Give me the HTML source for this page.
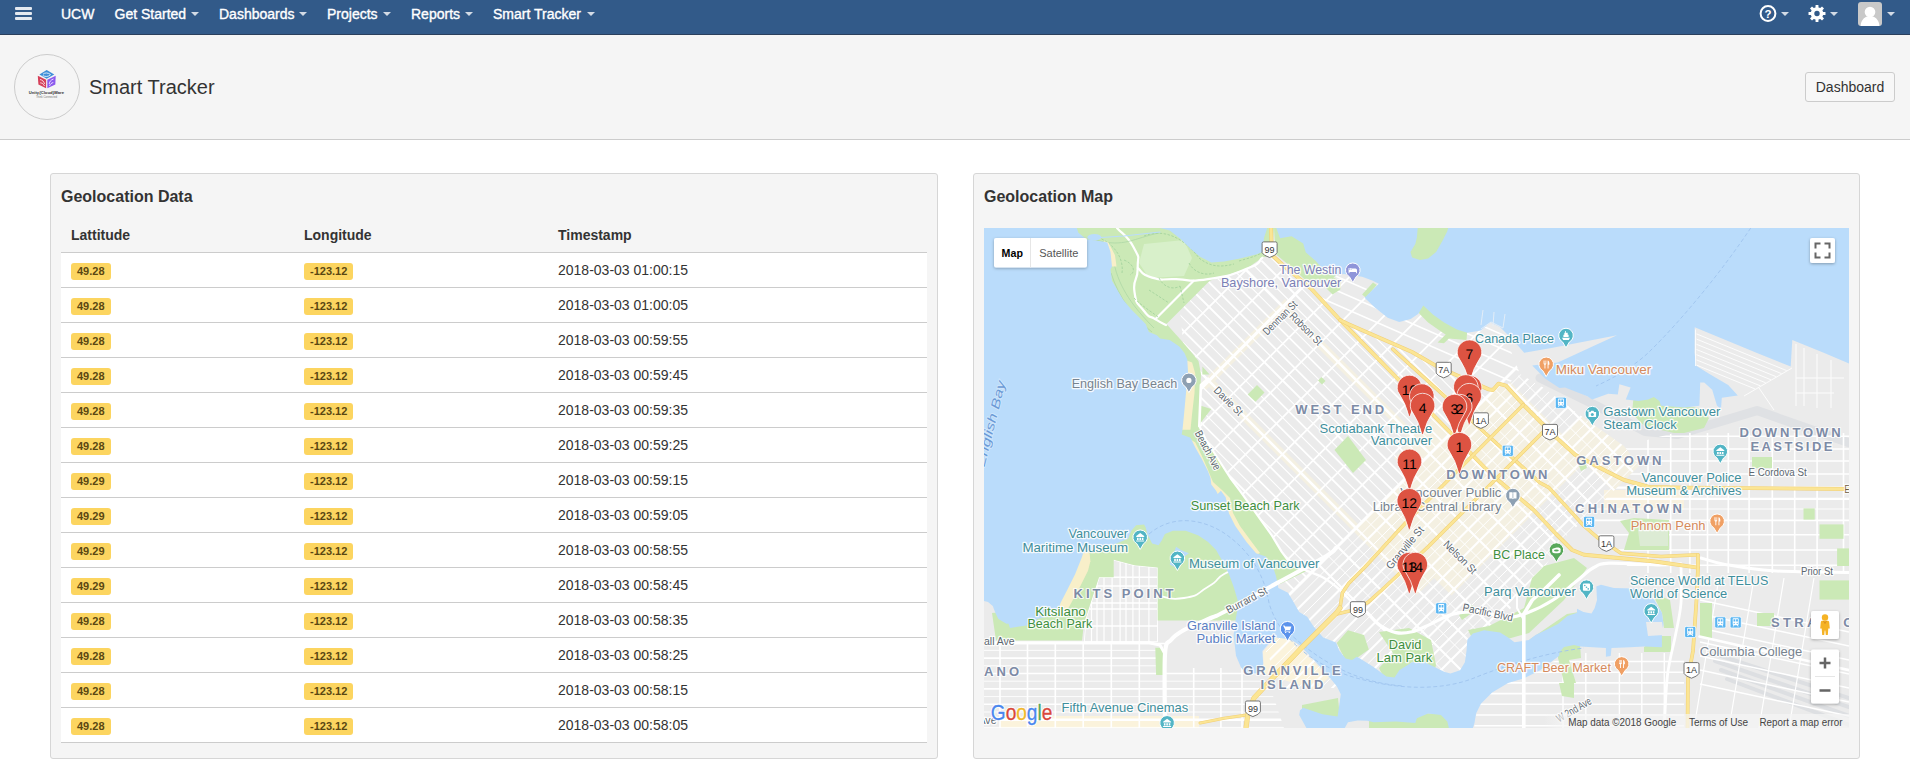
<!DOCTYPE html>
<html lang="en">
<head>
<meta charset="utf-8">
<title>Smart Tracker</title>
<style>
*{box-sizing:border-box;}
html,body{margin:0;padding:0;}
body{width:1910px;height:781px;overflow:hidden;background:#fff;color:#333;font-family:"Liberation Sans",Arial,sans-serif;font-size:14px;line-height:20px;position:relative;}
#nav{position:absolute;left:0;top:0;width:1910px;height:35px;background:#325a89;border-bottom:1px solid #2a3f5c;color:#fff;}
#nav .it{position:absolute;top:4px;font-size:14px;line-height:20px;color:#fff;white-space:nowrap;-webkit-text-stroke:0.35px #fff;}
#nav .car{position:absolute;top:12px;width:0;height:0;border-left:4px solid transparent;border-right:4px solid transparent;border-top:4px solid #d3dbe6;}
#burger{position:absolute;left:15px;top:7px;width:17px;height:13px;}
#burger i{display:block;height:3px;background:#e4e9f0;margin-bottom:2px;border-radius:1px;}
#phead{position:absolute;left:0;top:35px;width:1910px;height:105px;background:#f5f5f5;border-bottom:1px solid #ccc;}
#avatar{position:absolute;left:14px;top:19px;width:66px;height:66px;border-radius:50%;border:1px solid #ccc;background:#f5f5f5;overflow:hidden;}
#phead h1{position:absolute;left:89px;top:38px;margin:0;font-size:20px;line-height:28px;font-weight:normal;color:#333;}
#dashbtn{position:absolute;left:1805px;top:37px;width:90px;height:30px;border:1px solid #ccc;border-radius:3px;background:#f7f7f7;font-size:14px;line-height:28px;text-align:center;color:#333;}
.panel{position:absolute;top:173px;height:586px;background:#f5f5f5;border:1px solid #d6d6d6;border-radius:3px;}
.panel h2{position:absolute;left:10px;top:13px;margin:0;font-size:16px;line-height:20px;font-weight:bold;color:#333;}
#p1{left:50px;width:888px;}
#p2{left:973px;width:887px;}
table{position:absolute;left:10px;top:44px;width:866px;border-collapse:collapse;table-layout:fixed;}
th{height:34px;text-align:left;font-weight:bold;font-size:14px;padding:0 0 0 10px;color:#333;border-bottom:1px solid #ccc;}
td{height:35px;padding:0 0 0 10px;background:#fff;border-bottom:1px solid #ccc;font-size:14px;color:#333;vertical-align:middle;}
.lz{display:inline-block;background:#fcd560;color:#5a4712;font-size:11px;font-weight:bold;line-height:11px;padding:3px 6px 3px;border-radius:3px;vertical-align:middle;position:relative;top:1px;}
#map{position:absolute;left:10px;top:54px;width:865px;height:500px;overflow:hidden;background:#aad3f5;}
</style>
</head>
<body>
<div id="nav">
  <div id="burger"><i></i><i></i><i></i></div>
  <span class="it" style="left:61px">UCW</span>
  <span class="it" style="left:114.5px">Get Started</span><span class="car" style="left:191px"></span>
  <span class="it" style="left:219px">Dashboards</span><span class="car" style="left:299px"></span>
  <span class="it" style="left:327px">Projects</span><span class="car" style="left:383px"></span>
  <span class="it" style="left:411px">Reports</span><span class="car" style="left:465px"></span>
  <span class="it" style="left:493px">Smart Tracker</span><span class="car" style="left:586.5px"></span>
  <svg style="position:absolute;left:1755px;top:0" width="155" height="34" viewBox="1755 0 155 34">
    <circle cx="1768" cy="13.5" r="7.4" fill="none" stroke="#fff" stroke-width="2"/>
    <text x="1768" y="17.600" text-anchor="middle" font-family="Liberation Sans, Arial, sans-serif" font-weight="bold" font-size="11.5" fill="#fff">?</text>
    <path d="M1781 12h8l-4 4z" fill="#d3dbe6"/>
    <g transform="translate(1817 13.5)"><path d="M6.11 -1.52 L8.48 -1.41 L8.48 1.41 L6.11 1.52 L5.40 3.25 L7.00 5.00 L5.00 7.00 L3.25 5.40 L1.52 6.11 L1.41 8.48 L-1.41 8.48 L-1.52 6.11 L-3.25 5.40 L-5.00 7.00 L-7.00 5.00 L-5.40 3.25 L-6.11 1.52 L-8.48 1.41 L-8.48 -1.41 L-6.11 -1.52 L-5.40 -3.25 L-7.00 -5.00 L-5.00 -7.00 L-3.25 -5.40 L-1.52 -6.11 L-1.41 -8.48 L1.41 -8.48 L1.52 -6.11 L3.25 -5.40 L5.00 -7.00 L7.00 -5.00 L5.40 -3.25Z M2.7 0A2.7 2.7 0 1 0 -2.7 0A2.7 2.7 0 1 0 2.7 0Z" fill="#fff" fill-rule="evenodd"/></g>
    <path d="M1830 12h8l-4 4z" fill="#d3dbe6"/>
    <rect x="1858" y="2" width="24" height="24" rx="3" fill="#c9c9c9"/>
    <clipPath id="avc"><rect x="1858" y="2" width="24" height="24" rx="3"/></clipPath>
    <g clip-path="url(#avc)" fill="#fff"><circle cx="1870" cy="12" r="5.3"/><path d="M1860.5 27c0-6 3.5-10 7-10.5h5c3.500.5 7 4.500 7 10.500z"/></g>
    <path d="M1887 12h8l-4 4z" fill="#d3dbe6"/>
  </svg>
</div>
<div id="phead">
  <div id="avatar"><svg width="64" height="64" viewBox="0 0 64 64" style="position:absolute;left:0;top:0" font-family="Liberation Sans, Arial, sans-serif">
      <polygon points="24.4,19.5 31.700,15.100 39.300,19.500 31.700,23.700" fill="#3f8fd8"/>
      <polygon points="22.800,20.800 31.100,24.700 31.100,33.300 23.400,29.500" fill="#d6405a"/>
      <polygon points="32.300,24.700 40.700,20.800 40.300,29.500 32.300,33.300" fill="#8c5aee"/>
      <path d="M28 19.200c2 -1.800 5 -1.600 7.500 0.300M27.800 20.600c2.500 1.300 5.500 1.200 7.700 -0.800" stroke="#fff" stroke-width="0.800" fill="none"/>
      <path d="M25 24.500c2.500 0.500 4 2 4.500 4.500M25.200 27.800c2 0.200 3.600 1.300 4.300 3.200" stroke="#fff" stroke-width="0.800" fill="none"/>
      <path d="M38.500 24c-2.500 0.800 -4 2.500 -4.300 5M38.300 27.500c-1.800 0.400 -3.200 1.600 -3.800 3.500" stroke="#fff" stroke-width="0.800" fill="none"/>
      <text x="13.800" y="38.800" font-size="4.300" font-weight="bold" fill="#333" textLength="35.200" lengthAdjust="spacingAndGlyphs">Unity{Cloud}Ware</text>
      <text x="20.900" y="43.100" font-size="2.700" fill="#777" textLength="21.300" lengthAdjust="spacingAndGlyphs">Think Connected</text>
    </svg></div>
  <h1>Smart Tracker</h1>
  <div id="dashbtn">Dashboard</div>
</div>
<div class="panel" id="p1">
  <h2>Geolocation Data</h2>
  <table>
    <colgroup><col style="width:233px"><col style="width:254px"><col></colgroup>
    <tr><th>Lattitude</th><th>Longitude</th><th>Timestamp</th></tr>
    <tr><td><span class="lz">49.28</span></td><td><span class="lz">-123.12</span></td><td>2018-03-03 01:00:15</td></tr>
    <tr><td><span class="lz">49.28</span></td><td><span class="lz">-123.12</span></td><td>2018-03-03 01:00:05</td></tr>
    <tr><td><span class="lz">49.28</span></td><td><span class="lz">-123.12</span></td><td>2018-03-03 00:59:55</td></tr>
    <tr><td><span class="lz">49.28</span></td><td><span class="lz">-123.12</span></td><td>2018-03-03 00:59:45</td></tr>
    <tr><td><span class="lz">49.28</span></td><td><span class="lz">-123.12</span></td><td>2018-03-03 00:59:35</td></tr>
    <tr><td><span class="lz">49.28</span></td><td><span class="lz">-123.12</span></td><td>2018-03-03 00:59:25</td></tr>
    <tr><td><span class="lz">49.29</span></td><td><span class="lz">-123.12</span></td><td>2018-03-03 00:59:15</td></tr>
    <tr><td><span class="lz">49.29</span></td><td><span class="lz">-123.12</span></td><td>2018-03-03 00:59:05</td></tr>
    <tr><td><span class="lz">49.29</span></td><td><span class="lz">-123.12</span></td><td>2018-03-03 00:58:55</td></tr>
    <tr><td><span class="lz">49.29</span></td><td><span class="lz">-123.12</span></td><td>2018-03-03 00:58:45</td></tr>
    <tr><td><span class="lz">49.28</span></td><td><span class="lz">-123.12</span></td><td>2018-03-03 00:58:35</td></tr>
    <tr><td><span class="lz">49.28</span></td><td><span class="lz">-123.12</span></td><td>2018-03-03 00:58:25</td></tr>
    <tr><td><span class="lz">49.28</span></td><td><span class="lz">-123.12</span></td><td>2018-03-03 00:58:15</td></tr>
    <tr><td><span class="lz">49.28</span></td><td><span class="lz">-123.12</span></td><td>2018-03-03 00:58:05</td></tr>
  </table>
</div>
<div class="panel" id="p2">
  <h2>Geolocation Map</h2>
  <div id="map">
<svg width="865" height="500" viewBox="0 0 865 500" style="position:absolute;left:0;top:0;display:block" font-family="Liberation Sans, Arial, sans-serif">
<rect width="865" height="500" fill="#ebebeb"/>
<defs>
<clipPath id="c45"><polygon points="196.0,82.0 226.0,52.8 262.5,40.8 288.0,27.0 300.0,38.0 326.8,60.2 356.3,92.2 364.0,96.0 428.0,124.0 453.0,138.4 504.8,161.4 514.4,155.7 522.0,157.6 536.0,146.0 560.0,160.0 600.0,190.0 640.0,218.0 655.0,238.0 600.0,292.0 578.0,312.0 560.0,340.0 530.0,370.0 520.0,400.0 480.0,460.0 300.0,460.0 200.0,260.0 190.0,200.0 200.0,125.0"/></clipPath>
<clipPath id="c25"><polygon points="288.0,27.0 300.0,38.0 326.8,60.2 356.3,92.2 364.0,96.0 428.0,124.0 453.0,138.4 504.8,161.4 514.4,155.7 522.0,157.6 536.0,146.0 516.0,95.0 440.0,70.0 395.0,50.0 350.0,40.0 300.0,0.0 288.0,0.0"/></clipPath>
<clipPath id="cK"><polygon points="0.0,414.7 181.0,414.7 181.0,440.0 275.0,440.0 290.0,470.0 300.0,500.0 0.0,500.0"/></clipPath>
<clipPath id="cKP"><polygon points="129.7,331.7 150.5,337.2 173.7,339.6 173.7,414.0 100.0,414.0 102.0,390.0 115.0,349.3 129.7,349.3"/></clipPath>
<clipPath id="cE"><polygon points="640.0,218.0 690.0,205.0 865.0,205.0 865.0,345.0 650.0,345.0 600.0,292.0 655.0,238.0"/></clipPath>
<clipPath id="cS"><polygon points="490.0,500.0 495.0,470.0 520.0,452.0 560.0,436.0 600.0,425.0 700.0,425.0 700.0,330.0 865.0,345.0 865.0,500.0"/></clipPath>
<clipPath id="cPen"><polygon points="196.0,82.0 226.0,52.8 262.5,40.8 288.0,27.0 300.0,38.0 326.8,60.2 356.3,92.2 364.0,96.0 428.0,124.0 453.0,138.4 504.8,161.4 514.4,155.7 522.0,157.6 536.0,146.0 560.0,160.0 600.0,190.0 640.0,218.0 655.0,238.0 600.0,292.0 578.0,312.0 560.0,340.0 530.0,370.0 520.0,400.0 480.0,460.0 300.0,460.0 200.0,260.0 190.0,200.0 200.0,125.0"/><polygon points="288.0,27.0 300.0,38.0 326.8,60.2 356.3,92.2 364.0,96.0 428.0,124.0 453.0,138.4 504.8,161.4 514.4,155.7 522.0,157.6 536.0,146.0 516.0,95.0 440.0,70.0 395.0,50.0 350.0,40.0 300.0,0.0 288.0,0.0"/></clipPath>
</defs>
<g clip-path="url(#c45)" opacity="0.6">
<polygon points="216.0,156.0 222.0,162.0 307.0,77.0 301.0,71.0" fill="#fbf3dc" />
<polygon points="225.0,159.0 369.0,303.0 375.0,297.0 231.0,153.0" fill="#fbf3dc" />
<polygon points="299.0,85.0 443.0,229.0 449.0,223.0 305.0,79.0" fill="#fbf3dc" />
<polygon points="369.0,303.0 433.0,367.0 550.0,250.0 486.0,186.0" fill="#fbf3dc" />
<polygon points="576.0,210.0 633.0,267.0 670.0,230.0 613.0,173.0" fill="#fbf3dc" />
<polygon points="443.0,343.0 467.5,367.5 600.5,234.5 576.0,210.0" fill="#fbf3dc" />
<polygon points="486.0,186.0 550.0,250.0 586.0,214.0 522.0,150.0" fill="#fbf3dc" />
<polygon points="410.0,230.0 426.0,246.0 466.0,206.0 450.0,190.0" fill="#fbf3dc" />
</g>
<polygon points="16.0,488.0 215.0,488.0 215.0,500.0 16.0,500.0" fill="#fbf3dc" />
<polygon points="292.0,409.0 306.0,411.0 345.0,449.0 332.0,462.0 300.0,452.0 280.0,446.0 279.0,424.0" fill="#fbf3dc" />
<polygon points="620.0,262.0 700.0,262.0 700.0,282.0 620.0,282.0" fill="#fbf3dc" opacity="0.8"/>
<polyline points="556.0,150.0 613.0,178.0 661.0,203.4 693.0,206.6 773.0,182.6 865.0,214.7" fill="none" stroke="#dfe1e4" stroke-width="9" stroke-linejoin="round" stroke-linecap="round" />
<polyline points="725.0,424.0 865.0,470.0" fill="none" stroke="#dddfe2" stroke-width="4" stroke-linejoin="round" stroke-linecap="round" />
<polyline points="731.0,433.0 865.0,479.0" fill="none" stroke="#dddfe2" stroke-width="4" stroke-linejoin="round" stroke-linecap="round" />
<polyline points="737.0,442.0 865.0,488.0" fill="none" stroke="#dddfe2" stroke-width="4" stroke-linejoin="round" stroke-linecap="round" />
<polyline points="743.0,451.0 865.0,497.0" fill="none" stroke="#dddfe2" stroke-width="4" stroke-linejoin="round" stroke-linecap="round" />
<g clip-path="url(#cPen)" stroke="#fff" fill="none">
<line x1="52.0" y1="252.0" x2="502.0" y2="-198.0" stroke-width="1.8"/>
<line x1="70.4" y1="270.4" x2="520.4" y2="-179.6" stroke-width="1.8"/>
<line x1="88.8" y1="288.8" x2="538.8" y2="-161.2" stroke-width="3.0"/>
<line x1="107.2" y1="307.2" x2="557.2" y2="-142.8" stroke-width="1.8"/>
<line x1="125.6" y1="325.6" x2="575.6" y2="-124.4" stroke-width="1.8"/>
<line x1="144.0" y1="344.0" x2="594.0" y2="-106.0" stroke-width="1.8"/>
<line x1="162.4" y1="362.4" x2="612.4" y2="-87.6" stroke-width="1.8"/>
<line x1="180.8" y1="380.8" x2="630.8" y2="-69.2" stroke-width="1.8"/>
<line x1="199.2" y1="399.2" x2="649.2" y2="-50.8" stroke-width="1.8"/>
<line x1="217.6" y1="417.6" x2="667.6" y2="-32.4" stroke-width="1.8"/>
<line x1="236.0" y1="436.0" x2="686.0" y2="-14.0" stroke-width="3.0"/>
<line x1="247.4" y1="447.4" x2="697.4" y2="-2.6" stroke-width="2.1"/>
<line x1="241.7" y1="441.7" x2="691.7" y2="-8.3" stroke-width="1.0"/>
<line x1="258.7" y1="458.7" x2="708.7" y2="8.7" stroke-width="2.1"/>
<line x1="253.0" y1="453.0" x2="703.0" y2="3.0" stroke-width="1.0"/>
<line x1="270.1" y1="470.1" x2="720.0" y2="20.1" stroke-width="2.1"/>
<line x1="264.4" y1="464.4" x2="714.4" y2="14.4" stroke-width="1.0"/>
<line x1="281.4" y1="481.4" x2="731.4" y2="31.4" stroke-width="2.1"/>
<line x1="275.7" y1="475.7" x2="725.7" y2="25.7" stroke-width="1.0"/>
<line x1="292.8" y1="492.8" x2="742.8" y2="42.8" stroke-width="2.1"/>
<line x1="287.1" y1="487.1" x2="737.1" y2="37.1" stroke-width="1.0"/>
<line x1="304.1" y1="504.1" x2="754.1" y2="54.1" stroke-width="2.1"/>
<line x1="298.4" y1="498.4" x2="748.4" y2="48.4" stroke-width="1.0"/>
<line x1="315.4" y1="515.5" x2="765.5" y2="65.4" stroke-width="2.1"/>
<line x1="309.8" y1="509.8" x2="759.8" y2="59.8" stroke-width="1.0"/>
<line x1="326.8" y1="526.8" x2="776.8" y2="76.8" stroke-width="2.1"/>
<line x1="321.1" y1="521.1" x2="771.1" y2="71.1" stroke-width="1.0"/>
<line x1="338.1" y1="538.1" x2="788.1" y2="88.1" stroke-width="2.1"/>
<line x1="332.5" y1="532.5" x2="782.5" y2="82.5" stroke-width="1.0"/>
<line x1="349.5" y1="549.5" x2="799.5" y2="99.5" stroke-width="2.1"/>
<line x1="343.8" y1="543.8" x2="793.8" y2="93.8" stroke-width="1.0"/>
</g>
<g clip-path="url(#c45)" stroke="#fff" fill="none">
<line x1="105.2" y1="156.8" x2="310.2" y2="361.8" stroke-width="1.8"/>
<line x1="111.4" y1="150.6" x2="316.4" y2="355.6" stroke-width="1.1"/>
<line x1="117.6" y1="144.4" x2="322.6" y2="349.4" stroke-width="1.8"/>
<line x1="123.8" y1="138.2" x2="328.8" y2="343.2" stroke-width="1.1"/>
<line x1="129.9" y1="132.1" x2="334.9" y2="337.1" stroke-width="1.8"/>
<line x1="136.1" y1="125.9" x2="341.1" y2="330.9" stroke-width="1.1"/>
<line x1="142.3" y1="119.7" x2="347.3" y2="324.7" stroke-width="1.8"/>
<line x1="148.5" y1="113.5" x2="353.5" y2="318.5" stroke-width="1.1"/>
<line x1="154.7" y1="107.3" x2="359.6" y2="312.4" stroke-width="1.8"/>
<line x1="160.8" y1="101.2" x2="365.8" y2="306.2" stroke-width="1.1"/>
<line x1="167.0" y1="95.0" x2="372.0" y2="300.0" stroke-width="2.6"/>
<line x1="173.2" y1="88.8" x2="378.2" y2="293.8" stroke-width="1.1"/>
<line x1="179.3" y1="82.7" x2="384.4" y2="287.6" stroke-width="1.8"/>
<line x1="185.5" y1="76.5" x2="390.5" y2="281.5" stroke-width="1.1"/>
<line x1="191.7" y1="70.3" x2="396.7" y2="275.3" stroke-width="1.8"/>
<line x1="197.9" y1="64.1" x2="402.9" y2="269.1" stroke-width="1.1"/>
<line x1="204.1" y1="58.0" x2="409.1" y2="262.9" stroke-width="1.8"/>
<line x1="210.2" y1="51.8" x2="415.2" y2="256.8" stroke-width="1.1"/>
<line x1="216.4" y1="45.6" x2="421.4" y2="250.6" stroke-width="1.8"/>
<line x1="222.6" y1="39.4" x2="427.6" y2="244.4" stroke-width="1.1"/>
<line x1="228.8" y1="33.2" x2="433.8" y2="238.2" stroke-width="1.8"/>
<line x1="234.9" y1="27.1" x2="439.9" y2="232.1" stroke-width="1.1"/>
<line x1="241.1" y1="20.9" x2="446.1" y2="225.9" stroke-width="2.6"/>
<line x1="247.3" y1="14.7" x2="452.3" y2="219.7" stroke-width="1.1"/>
<line x1="253.4" y1="8.5" x2="458.4" y2="213.6" stroke-width="1.8"/>
<line x1="259.6" y1="2.4" x2="464.6" y2="207.4" stroke-width="1.1"/>
<line x1="265.8" y1="-3.8" x2="470.8" y2="201.2" stroke-width="1.8"/>
<line x1="272.0" y1="-10.0" x2="477.0" y2="195.0" stroke-width="1.1"/>
<line x1="278.1" y1="-16.1" x2="483.1" y2="188.9" stroke-width="1.8"/>
<line x1="284.3" y1="-22.3" x2="489.3" y2="182.7" stroke-width="1.1"/>
<line x1="290.5" y1="-28.5" x2="495.5" y2="176.5" stroke-width="1.8"/>
<line x1="296.7" y1="-34.7" x2="501.7" y2="170.3" stroke-width="1.1"/>
<line x1="302.9" y1="-40.8" x2="507.9" y2="164.2" stroke-width="1.8"/>
<line x1="309.0" y1="-47.0" x2="514.0" y2="158.0" stroke-width="1.1"/>
<line x1="315.2" y1="-53.2" x2="520.2" y2="151.8" stroke-width="1.8"/>
<line x1="321.4" y1="-59.4" x2="526.4" y2="145.6" stroke-width="1.1"/>
<line x1="327.5" y1="-65.5" x2="532.5" y2="139.5" stroke-width="1.8"/>
<line x1="333.7" y1="-71.7" x2="538.7" y2="133.3" stroke-width="1.1"/>
<line x1="339.9" y1="-77.9" x2="544.9" y2="127.1" stroke-width="1.8"/>
<line x1="346.1" y1="-84.1" x2="551.1" y2="120.9" stroke-width="1.1"/>
<line x1="352.2" y1="-90.2" x2="557.2" y2="114.8" stroke-width="1.8"/>
<line x1="358.4" y1="-96.4" x2="563.4" y2="108.6" stroke-width="1.1"/>
<line x1="335.0" y1="337.0" x2="499.0" y2="501.0" stroke-width="2.1"/>
<line x1="344.2" y1="327.8" x2="508.2" y2="491.8" stroke-width="1.0"/>
<line x1="353.5" y1="318.5" x2="517.5" y2="482.5" stroke-width="2.1"/>
<line x1="362.8" y1="309.2" x2="526.8" y2="473.2" stroke-width="1.0"/>
<line x1="372.0" y1="300.0" x2="536.0" y2="464.0" stroke-width="2.1"/>
<line x1="381.2" y1="290.8" x2="545.2" y2="454.8" stroke-width="1.0"/>
<line x1="390.5" y1="281.5" x2="554.5" y2="445.5" stroke-width="2.1"/>
<line x1="399.8" y1="272.2" x2="563.8" y2="436.2" stroke-width="1.0"/>
<line x1="409.0" y1="263.0" x2="573.0" y2="427.0" stroke-width="2.1"/>
<line x1="418.2" y1="253.8" x2="582.2" y2="417.8" stroke-width="1.0"/>
<line x1="427.5" y1="244.5" x2="591.5" y2="408.5" stroke-width="2.1"/>
<line x1="436.8" y1="235.2" x2="600.8" y2="399.2" stroke-width="1.0"/>
<line x1="446.0" y1="226.0" x2="610.0" y2="390.0" stroke-width="2.1"/>
<line x1="455.2" y1="216.8" x2="619.2" y2="380.8" stroke-width="1.0"/>
<line x1="464.5" y1="207.5" x2="628.5" y2="371.5" stroke-width="2.1"/>
<line x1="473.8" y1="198.2" x2="637.8" y2="362.2" stroke-width="1.0"/>
<line x1="483.0" y1="189.0" x2="647.0" y2="353.0" stroke-width="2.1"/>
<line x1="492.2" y1="179.8" x2="656.2" y2="343.8" stroke-width="1.0"/>
<line x1="501.5" y1="170.5" x2="665.5" y2="334.5" stroke-width="2.1"/>
<line x1="510.8" y1="161.2" x2="674.8" y2="325.2" stroke-width="1.0"/>
<line x1="520.0" y1="152.0" x2="684.0" y2="316.0" stroke-width="2.1"/>
<line x1="529.2" y1="142.8" x2="693.2" y2="306.8" stroke-width="1.0"/>
<line x1="538.5" y1="133.5" x2="702.5" y2="297.5" stroke-width="2.1"/>
<line x1="547.8" y1="124.2" x2="711.8" y2="288.2" stroke-width="1.0"/>
<line x1="557.0" y1="115.0" x2="721.0" y2="279.0" stroke-width="2.1"/>
<line x1="566.2" y1="105.8" x2="730.2" y2="269.8" stroke-width="1.0"/>
</g>
<g clip-path="url(#c25)" stroke="#fff" fill="none">
<line x1="295.9" y1="52.0" x2="570.8" y2="172.3" stroke-width="1.6"/>
<line x1="301.1" y1="40.1" x2="576.0" y2="160.4" stroke-width="1.6"/>
<line x1="306.3" y1="28.2" x2="581.2" y2="148.4" stroke-width="1.6"/>
<line x1="311.6" y1="16.3" x2="586.4" y2="136.5" stroke-width="1.6"/>
<line x1="316.8" y1="4.4" x2="591.6" y2="124.6" stroke-width="1.6"/>
</g>
<g clip-path="url(#cK)" stroke="#fff" fill="none">
<line x1="0" y1="414.7" x2="300" y2="414.7" stroke-width="3.0"/>
<line x1="0" y1="422.4" x2="300" y2="422.4" stroke-width="0.9"/>
<line x1="0" y1="430.1" x2="300" y2="430.1" stroke-width="1.6"/>
<line x1="0" y1="437.8" x2="300" y2="437.8" stroke-width="0.9"/>
<line x1="0" y1="445.5" x2="300" y2="445.5" stroke-width="1.6"/>
<line x1="0" y1="453.2" x2="300" y2="453.2" stroke-width="0.9"/>
<line x1="0" y1="460.9" x2="300" y2="460.9" stroke-width="1.6"/>
<line x1="0" y1="468.6" x2="300" y2="468.6" stroke-width="0.9"/>
<line x1="0" y1="476.3" x2="300" y2="476.3" stroke-width="1.6"/>
<line x1="0" y1="484.0" x2="300" y2="484.0" stroke-width="0.9"/>
<line x1="0" y1="491.7" x2="300" y2="491.7" stroke-width="2.4"/>
<line x1="0" y1="499.4" x2="300" y2="499.4" stroke-width="0.9"/>
<line x1="16.0" y1="410" x2="16.0" y2="500" stroke-width="1.6"/>
<line x1="43.5" y1="410" x2="43.5" y2="500" stroke-width="1.6"/>
<line x1="71.3" y1="410" x2="71.3" y2="500" stroke-width="1.6"/>
<line x1="99.2" y1="410" x2="99.2" y2="500" stroke-width="1.6"/>
<line x1="127.3" y1="410" x2="127.3" y2="500" stroke-width="1.6"/>
<line x1="155.3" y1="410" x2="155.3" y2="500" stroke-width="1.6"/>
<line x1="209.7" y1="410" x2="209.7" y2="500" stroke-width="1.6"/>
<line x1="236.9" y1="410" x2="236.9" y2="500" stroke-width="1.6"/>
<line x1="258.0" y1="410" x2="258.0" y2="500" stroke-width="1.6"/>
</g>
<g clip-path="url(#cKP)" stroke="#fff" fill="none">
<line x1="100.0" y1="330" x2="100.0" y2="414" stroke-width="1.2"/>
<line x1="107.5" y1="330" x2="107.5" y2="414" stroke-width="1.2"/>
<line x1="113.0" y1="330" x2="113.0" y2="414" stroke-width="1.2"/>
<line x1="120.0" y1="330" x2="120.0" y2="414" stroke-width="1.2"/>
<line x1="128.1" y1="330" x2="128.1" y2="414" stroke-width="1.2"/>
<line x1="136.1" y1="330" x2="136.1" y2="414" stroke-width="1.2"/>
<line x1="142.0" y1="330" x2="142.0" y2="414" stroke-width="1.2"/>
<line x1="148.9" y1="330" x2="148.9" y2="414" stroke-width="1.2"/>
<line x1="155.3" y1="330" x2="155.3" y2="414" stroke-width="1.2"/>
<line x1="164.9" y1="330" x2="164.9" y2="414" stroke-width="1.2"/>
<line x1="173.7" y1="330" x2="173.7" y2="414" stroke-width="1.2"/>
<line x1="95" y1="349.3" x2="175" y2="349.3" stroke-width="1.4"/>
<line x1="95" y1="358.0" x2="175" y2="358.0" stroke-width="1.4"/>
<line x1="95" y1="375.0" x2="175" y2="375.0" stroke-width="1.4"/>
<line x1="95" y1="381.0" x2="175" y2="381.0" stroke-width="1.4"/>
<line x1="95" y1="398.0" x2="175" y2="398.0" stroke-width="1.4"/>
<polyline points="129.7,331.7 150.5,337.2 173.7,339.6 173.7,414.0 100.0,414.0 102.0,390.0 115.0,349.3 129.7,349.3" fill="none" stroke="#fff" stroke-width="1.4" stroke-linejoin="round" stroke-linecap="round" />
</g>
<g clip-path="url(#cE)" stroke="#fff" fill="none">
<line x1="600" y1="208.2" x2="865" y2="208.2" stroke-width="1.6"/>
<line x1="600" y1="221.0" x2="865" y2="221.0" stroke-width="1.6"/>
<line x1="600" y1="233.0" x2="865" y2="233.0" stroke-width="1.6"/>
<line x1="600" y1="246.0" x2="865" y2="246.0" stroke-width="1.6"/>
<line x1="600" y1="259.6" x2="865" y2="259.6" stroke-width="2.4"/>
<line x1="600" y1="270.8" x2="865" y2="270.8" stroke-width="2.2"/>
<line x1="600" y1="281.0" x2="865" y2="281.0" stroke-width="0.9"/>
<line x1="600" y1="292.4" x2="865" y2="292.4" stroke-width="1.6"/>
<line x1="600" y1="306.8" x2="865" y2="306.8" stroke-width="1.6"/>
<line x1="600" y1="322.0" x2="865" y2="322.0" stroke-width="1.6"/>
<line x1="600" y1="337.2" x2="865" y2="337.2" stroke-width="1.6"/>
<line x1="664.0" y1="200" x2="664.0" y2="345" stroke-width="1.6"/>
<line x1="686.7" y1="200" x2="686.7" y2="345" stroke-width="1.6"/>
<line x1="705.9" y1="200" x2="705.9" y2="345" stroke-width="1.6"/>
<line x1="723.5" y1="200" x2="723.5" y2="345" stroke-width="1.6"/>
<line x1="744.3" y1="200" x2="744.3" y2="345" stroke-width="1.6"/>
<line x1="765.1" y1="200" x2="765.1" y2="345" stroke-width="1.6"/>
<line x1="788.3" y1="200" x2="788.3" y2="345" stroke-width="1.6"/>
<line x1="810.7" y1="200" x2="810.7" y2="345" stroke-width="1.6"/>
<line x1="833.1" y1="200" x2="833.1" y2="345" stroke-width="1.6"/>
<line x1="859.5" y1="200" x2="859.5" y2="345" stroke-width="1.6"/>
</g>
<g clip-path="url(#cS)" stroke="#fff" fill="none">
<line x1="480" y1="433.5" x2="700" y2="433.5" stroke-width="1.6"/>
<line x1="480" y1="444.2" x2="700" y2="444.2" stroke-width="1.6"/>
<line x1="480" y1="454.9" x2="700" y2="454.9" stroke-width="1.6"/>
<line x1="480" y1="465.6" x2="700" y2="465.6" stroke-width="1.6"/>
<line x1="480" y1="476.3" x2="700" y2="476.3" stroke-width="1.6"/>
<line x1="480" y1="487.0" x2="700" y2="487.0" stroke-width="1.6"/>
<line x1="480" y1="497.7" x2="700" y2="497.7" stroke-width="1.6"/>
<line x1="480" y1="508.4" x2="700" y2="508.4" stroke-width="1.6"/>
<line x1="579.0" y1="425" x2="579.0" y2="500" stroke-width="1.4"/>
<line x1="601.8" y1="425" x2="601.8" y2="500" stroke-width="1.4"/>
<line x1="635.4" y1="425" x2="635.4" y2="500" stroke-width="1.4"/>
<line x1="657.8" y1="425" x2="657.8" y2="500" stroke-width="1.4"/>
<line x1="680.3" y1="425" x2="680.3" y2="500" stroke-width="1.4"/>
<line x1="716" y1="372.0" x2="865" y2="404.0" stroke-width="1.5"/>
<line x1="716" y1="386.0" x2="865" y2="418.0" stroke-width="1.5"/>
<line x1="716" y1="400.0" x2="865" y2="432.0" stroke-width="1.5"/>
<line x1="716" y1="414.0" x2="865" y2="446.0" stroke-width="1.5"/>
<line x1="716" y1="428.0" x2="865" y2="460.0" stroke-width="1.5"/>
<line x1="716" y1="442.0" x2="865" y2="474.0" stroke-width="1.5"/>
<line x1="716" y1="456.0" x2="865" y2="488.0" stroke-width="1.5"/>
<line x1="735.0" y1="350" x2="710.0" y2="500" stroke-width="1.2"/>
<line x1="770.0" y1="350" x2="745.0" y2="500" stroke-width="1.2"/>
<line x1="800.0" y1="350" x2="775.0" y2="500" stroke-width="1.2"/>
<line x1="830.0" y1="350" x2="805.0" y2="500" stroke-width="1.2"/>
</g>
<polygon points="80.0,0.0 290.0,0.0 288.0,27.0 278.5,29.6 262.5,40.8 225.7,52.8 182.5,96.0 196.9,112.0 208.0,125.0 214.5,133.0 217.0,146.0 216.5,160.0 215.8,180.0 215.3,198.0 222.0,212.0 246.4,250.0 256.0,262.8 272.0,285.2 288.0,307.6 297.6,323.6 307.0,336.4 323.0,342.8 296.0,356.0 270.0,330.0 220.0,270.0 190.0,215.0 150.0,120.0 100.0,30.0" fill="#cbe9b6" />
<polygon points="290.0,0.0 300.0,0.0 325.0,10.0 345.0,40.0 352.0,48.0 344.0,52.0 338.0,55.0 326.0,56.0 300.0,33.0 291.5,26.0" fill="#cbe9b6" />
<polygon points="342.2,60.2 348.6,48.7 356.3,53.8 356.3,61.5 348.6,66.6" fill="#cbe9b6" />
<polygon points="378.1,66.6 389.0,54.4 392.8,57.0 381.9,69.8" fill="#cbe9b6" />
<polygon points="439.3,70.0 448.9,80.0 460.1,90.0 472.9,98.0 483.3,102.0 482.5,112.0 464.9,110.4 460.0,115.2 453.6,114.4 461.7,106.4 457.7,104.0 444.1,94.4 434.5,84.8" fill="#cbe9b6" />
<polygon points="218.4,138.6 225.6,146.6 218.4,146.6" fill="#cbe9b6" />
<polygon points="216.9,177.8 227.3,181.0 216.1,195.4" fill="#cbe9b6" />
<polygon points="263.7,166.6 273.0,157.0 280.5,164.6 271.5,173.7" fill="#cbe9b6" />
<polygon points="334.0,152.5 337.5,149.0 341.5,153.0 338.0,156.5" fill="#cbe9b6" />
<polygon points="350.5,222.0 364.0,208.0 382.0,232.0 369.0,245.0" fill="#cbe9b6" />
<polygon points="650.0,165.0 672.0,165.0 680.0,175.0 715.0,180.0 725.0,190.0 720.0,200.0 700.0,205.0 690.0,205.0 660.0,198.0 648.0,185.0" fill="#cbe9b6" />
<polygon points="95.0,320.0 140.0,306.0 148.0,292.0 166.0,292.0 170.0,300.0 260.0,290.0 262.0,378.0 255.0,392.6 173.7,392.6 173.7,339.6 150.5,337.2 129.7,331.7 129.7,349.3 115.0,349.3 100.0,395.0 98.0,412.5 12.0,412.5 8.0,385.0 60.0,380.0" fill="#cbe9b6" />
<polygon points="171.3,419.8 180.1,419.8 180.1,447.0 172.1,447.0" fill="#cbe9b6" />
<polygon points="364.0,402.2 380.0,407.0 384.8,421.4 373.6,429.4 364.0,436.0 360.8,431.0 356.0,421.4 352.8,415.0" fill="#cbe9b6" />
<polygon points="395.0,404.0 425.0,400.0 447.0,412.0 452.0,437.0 450.0,445.0 440.0,434.0 428.0,434.0 412.0,450.0 400.0,450.0 395.0,440.0 409.0,425.0" fill="#cbe9b6" />
<polygon points="318.0,477.0 354.0,470.0 356.0,490.0 318.0,484.0" fill="#cbe9b6" />
<polygon points="385.0,493.0 433.0,485.0 464.0,486.0 466.0,500.0 385.0,500.0" fill="#cbe9b6" />
<polygon points="475.0,387.0 488.0,377.0 492.0,382.0 478.0,392.0" fill="#cbe9b6" />
<polygon points="548.0,350.0 560.0,338.0 590.0,330.0 603.0,340.0 580.0,372.0 545.0,405.0 520.0,412.0 488.0,410.0 484.0,402.0 505.0,398.0 540.0,380.0" fill="#cbe9b6" />
<polygon points="545.0,412.0 583.0,386.0 595.0,384.0 596.0,392.0 560.0,408.0 548.0,418.0" fill="#cbe9b6" />
<polygon points="636.0,293.0 650.0,290.0 685.0,292.0 685.0,322.0 640.0,322.0 645.0,305.0" fill="#cbe9b6" />
<polygon points="668.0,365.0 686.0,372.0 690.0,400.0 680.0,400.0 678.0,385.0" fill="#cbe9b6" />
<polygon points="677.0,408.0 687.0,408.0 687.0,424.0 660.0,424.0 660.0,419.0" fill="#cbe9b6" />
<polygon points="716.0,375.0 728.0,375.0 728.0,410.0 716.0,410.0" fill="#cbe9b6" />
<polygon points="574.0,417.0 596.0,416.0 597.0,430.0 585.0,432.0 592.0,455.0 580.0,455.0 574.0,430.0" fill="#cbe9b6" />
<polygon points="575.0,455.0 590.0,455.0 590.0,470.0 578.0,468.0" fill="#cbe9b6" />
<polygon points="819.5,280.4 830.7,280.4 830.7,291.6 819.5,291.6" fill="#cbe9b6" />
<polygon points="835.5,296.4 859.5,296.4 859.5,310.8 835.5,310.8" fill="#cbe9b6" />
<polygon points="853.1,320.4 865.0,320.4 865.0,338.0 853.1,338.0" fill="#cbe9b6" />
<polygon points="835.5,352.4 865.0,352.4 865.0,371.6 835.5,371.6" fill="#cbe9b6" />
<polygon points="773.0,385.0 790.0,385.0 790.0,398.0 773.0,398.0" fill="#cbe9b6" />
<polygon points="768.0,229.0 788.0,229.0 788.0,240.0 768.0,240.0" fill="#cbe9b6" />
<polygon points="594.0,235.0 600.0,232.0 603.0,240.0 597.0,243.0" fill="#cbe9b6" />
<polygon points="160.0,16.0 200.0,12.0 208.0,30.0 200.0,48.0 165.0,50.0 155.0,35.0" fill="#d8f0ca" />
<polygon points="654.0,302.0 684.0,302.0 684.0,318.0 656.0,318.0" fill="#dcebd4" />
<path d="M133.0 0.0C138.7 6.7 143.1 6.7 150.0 20.0C156.9 33.3 153.5 25.3 153.7 40.0C153.9 54.7 148.4 49.7 150.5 64.0C152.6 78.3 153.1 73.9 160.0 83.0C166.9 92.1 164.0 86.5 171.3 91.2C178.6 95.9 178.4 95.1 182.0 97.0" fill="none" stroke="#fff" stroke-width="2.2" stroke-linejoin="round" stroke-linecap="round" />
<path d="M153.7 40.0C158.5 43.2 155.2 45.9 168.0 49.6C180.8 53.3 173.3 50.7 192.0 51.2C210.7 51.7 200.5 54.7 224.0 51.2C247.5 47.7 244.3 48.0 262.5 40.8C280.7 33.6 273.2 33.3 278.5 29.6" fill="none" stroke="#fff" stroke-width="2.2" stroke-linejoin="round" stroke-linecap="round" />
<polyline points="171.3,91.2 209.7,52.8" fill="none" stroke="#fff" stroke-width="2.2" stroke-linejoin="round" stroke-linecap="round" />
<path d="M173.7 367.6C182.5 368.4 183.2 372.9 200.0 370.0C216.8 367.1 210.7 366.8 224.1 358.8C237.5 350.8 230.0 351.6 240.1 346.0C250.2 340.4 249.7 343.3 254.5 342.0" fill="none" stroke="#fff" stroke-width="1.8" stroke-linejoin="round" stroke-linecap="round" />
<polyline points="215.3,198.0 216.9,157.0 224.1,150.6" fill="none" stroke="#fff" stroke-width="2.6" stroke-linejoin="round" stroke-linecap="round" />
<polyline points="215.3,198.0 222.0,212.0 246.4,250.0 256.0,262.8 272.0,285.2 288.0,307.6 297.6,323.6 307.0,336.4 323.0,342.8" fill="none" stroke="#fff" stroke-width="2.2" stroke-linejoin="round" stroke-linecap="round" />
<g stroke="#9fd09a" stroke-width="0.8" fill="none" stroke-dasharray="2.5 1.5">
<path d="M110 8C130 14 140 30 138 45M140 32C150 36 152 44 146 47M160 8C180 0 200 10 215 30M215 30C225 38 235 40 250 36M175 50C180 60 190 62 196 58M196 58L200 75M165 62L185 75M150 70C160 80 170 85 175 90M205 35C210 45 222 48 230 45M255 33C265 30 275 28 285 20"/>
</g>
<g stroke="#a9d6a3" stroke-width="0.7" fill="none"><path d="M130 35C135 60 150 80 170 100M127 45C135 70 150 90 168 104M112 12C140 20 150 10 175 5"/></g>
<polygon points="119.5,13.0 124.5,14.5 131.0,27.2 132.5,38.4 126.0,38.4 124.0,24.0" fill="#f8efc9" />
<polygon points="200.0,131.4 208.1,134.6 211.3,145.8 210.5,165.0 208.1,185.8 206.5,201.8 196.0,201.8 198.0,165.0 200.0,145.8" fill="#f8efc9" />
<polygon points="204.0,209.8 211.3,214.6 217.7,227.4 223.3,240.2 229.0,254.0 238.0,262.0 246.0,270.0 249.0,285.0 256.0,298.0 267.0,313.0 276.0,325.0 270.0,328.0 255.0,310.0 240.0,285.0 225.0,258.0 210.0,225.0" fill="#f8efc9" />
<polygon points="70.0,380.0 90.0,330.0 99.2,320.0 105.6,325.2 106.4,333.2 104.0,342.8 96.0,358.8 87.2,375.0 80.0,388.0" fill="#f8efc9" />
<polygon points="0.0,0.0 92.8,0.0 94.4,4.8 102.4,11.2 118.5,13.6 123.3,14.4 126.5,24.0 128.0,38.4 126.5,41.6 128.0,52.8 134.5,64.0 139.3,72.0 147.3,81.6 155.3,89.6 161.7,96.0 164.9,104.0 172.9,107.3 176.1,110.5 185.7,112.0 195.3,118.5 200.5,125.0 203.3,131.4 204.1,145.8 202.0,165.0 200.1,185.8 198.5,201.8 197.7,206.6 206.5,209.8 211.3,219.4 217.7,230.7 224.1,243.5 226.5,250.0 227.3,256.4 232.1,262.8 233.7,266.0 236.9,262.8 241.7,269.2 244.9,285.2 251.3,298.0 262.5,314.0 272.1,325.2 281.7,328.4 288.0,336.0 292.0,348.0 294.4,360.0 304.0,364.8 308.8,372.8 315.2,384.0 323.2,388.8 329.6,398.4 339.2,409.6 352.0,414.4 355.2,422.4 361.6,430.4 368.0,432.0 372.8,428.8 376.8,431.0 389.6,439.0 402.4,448.6 410.5,449.4 415.3,442.2 428.1,434.2 440.9,434.2 450.5,439.0 460.1,443.8 466.5,445.4 476.1,442.2 480.9,434.2 482.5,423.0 483.3,411.8 488.9,405.4 500.1,402.2 516.1,404.6 524.1,409.4 530.5,414.2 544.9,412.0 551.5,407.0 560.9,402.4 573.9,396.0 583.5,388.0 593.0,384.8 593.0,380.8 599.5,384.0 607.5,385.6 610.7,380.0 613.0,372.0 612.3,358.4 617.0,356.8 629.9,360.0 650.7,360.5 669.9,371.2 677.9,384.8 679.5,396.0 677.9,407.2 677.9,419.2 660.3,418.4 645.9,419.2 627.5,420.0 626.7,428.0 621.9,428.8 621.9,420.0 609.0,419.2 596.3,418.4 590.0,417.0 580.0,419.0 575.5,424.0 575.3,427.8 556.1,442.2 540.1,450.2 524.1,455.0 508.1,464.6 496.9,475.8 492.1,485.5 490.5,495.0 488.9,500.0 464.9,500.0 463.3,493.5 456.9,487.0 444.1,485.5 432.9,490.3 431.3,495.0 412.1,493.5 389.6,494.3 383.2,492.7 373.6,492.6 364.0,494.2 360.8,500.0 322.4,500.0 315.2,487.0 316.0,482.2 319.2,479.8 338.4,486.2 353.6,488.6 355.2,477.4 356.8,466.2 352.8,458.2 344.8,448.6 332.0,434.2 316.0,417.4 307.2,411.8 303.2,411.0 292.0,409.4 284.0,416.6 278.4,423.0 279.2,435.8 276.0,445.4 261.6,445.4 256.8,439.0 252.0,427.8 249.6,407.0 252.0,389.4 254.5,375.0 249.7,358.9 244.9,346.0 238.5,333.2 232.1,322.0 224.1,314.0 214.5,307.6 201.7,302.8 188.9,302.8 180.9,306.0 177.7,312.4 174.5,317.2 168.1,315.6 163.3,306.0 161.7,299.6 160.1,296.4 152.1,297.2 147.3,302.8 144.1,310.8 128.1,317.2 112.1,320.4 99.2,325.2 97.6,330.0 91.2,346.0 83.2,362.0 76.5,375.0 75.2,379.8 67.2,387.8 52.8,391.0 40.0,394.2 22.4,395.8 14.4,391.0 11.2,384.6 8.8,378.0 4.0,374.0 0.0,373.0" fill="#badcfb" />
<polygon points="292.3,0.0 296.1,10.2 307.6,8.3 319.2,15.4 321.7,24.3 332.0,33.3 339.6,42.3 349.9,47.4 360.1,46.1 378.1,48.7 388.3,52.5 394.7,55.7 380.6,69.8 390.9,79.4 403.7,89.7 415.2,94.1 426.7,90.9 434.4,85.8 439.3,77.6 448.9,86.4 460.1,94.4 472.9,101.6 483.3,104.8 496.9,102.4 506.5,94.4 512.9,97.6 516.2,99.2 529.0,112.0 540.2,124.8 567.4,120.0 633.0,107.2 612.2,116.8 573.8,134.4 548.2,137.6 561.0,150.4 575.4,160.0 581.0,159.4 603.4,168.2 608.2,171.4 624.2,165.8 633.8,166.6 635.4,156.2 646.6,159.4 641.8,171.4 654.6,173.0 664.2,171.4 669.8,169.0 675.4,173.0 677.0,177.8 701.0,179.4 715.4,177.8 716.2,154.6 720.2,154.6 728.2,161.8 733.0,177.8 737.0,181.0 737.8,169.8 753.8,167.4 744.2,157.0 725.0,145.8 712.2,137.8 710.6,125.0 710.7,99.2 773.0,125.0 806.7,138.6 807.5,125.0 808.3,112.0 840.3,125.0 865.0,135.4 865.0,0.0" fill="#badcfb" />
<polygon points="176.1,0.0 185.7,2.4 196.9,11.2 206.5,20.8 216.1,28.8 227.3,34.4 240.1,33.6 256.1,30.4 272.1,26.4 278.5,24.0 280.1,9.6 283.3,0.0" fill="#badcfb" />
<polygon points="185.7,336.4 192.1,318.8 196.9,322.0 204.9,325.2 198.5,330.0 192.1,339.6" fill="#badcfb" />
<polygon points="24.0,394.2 52.8,391.0 52.8,396.0 26.0,400.0" fill="#badcfb" />
<ellipse cx="110.4" cy="9.3" rx="7" ry="3.2" fill="#badcfb"/>
<polyline points="117.0,9.5 140.0,8.0 176.0,4.0" fill="none" stroke="#badcfb" stroke-width="1.2" stroke-linejoin="round" stroke-linecap="round" />
<polygon points="433.7,0.0 432.9,9.6 431.3,16.0 426.5,24.0 428.1,29.6 436.1,32.0 444.1,30.4 452.1,24.0 458.5,12.8 463.3,3.2 464.1,0.0" fill="#cbe9b6" />
<polygon points="662.0,394.0 678.0,394.0 680.0,407.0 664.0,408.0" fill="#ebebeb" />
<g stroke="#fff" stroke-width="0.9" fill="none" opacity="0.95">
<path d="M712.5 105.9 L802.7 142.6"/>
<path d="M712.5 111.1 L797.5 145.6"/>
<path d="M712.5 116.3 L792.2 148.7"/>
<path d="M712.5 121.5 L787.0 151.8"/>
<path d="M712.5 126.7 L781.7 154.8"/>
<path d="M712.5 131.9 L776.5 157.9"/>
<path d="M712.5 137.1 L771.2 161.0"/>
<path d="M711.5 101.5V138M812 116V178M820 120V178M833 126V180M847 132V180M812 150H860M812 165H850"/>
<path d="M808 140L760 168M775 160L790 182"/>
</g>
<g stroke="#e6eef6" stroke-width="0.9" fill="none"><path d="M497 101l10 -7 12 6M499 82l-2 15M510 84l-1 14M521 86l-2 14"/></g>
<g stroke="#9fc4ee" stroke-width="0.9" fill="none" stroke-dasharray="4 2.5">
<path d="M766.7 0 C740 40 700 90 664 125 C650 138 630 150 612 158"/>
<path d="M165 306 C190 285 220 292 240 305 C265 322 280 345 285 375 C295 410 330 440 380 452 C420 462 460 462 490 450 C520 438 560 425 600 420"/>
<path d="M300 400 C330 430 370 455 420 458"/>
</g>
<path d="M181.0 500.0C181.0 487.7 180.0 440.7 181.0 426.0C182.0 411.3 183.8 416.0 187.0 412.0C190.2 408.0 193.2 405.8 200.0 402.0C206.8 398.2 221.3 392.5 228.0 389.5C234.7 386.5 229.2 389.7 240.0 384.0C250.8 378.3 275.7 364.5 292.8 355.2C309.9 345.9 332.5 333.9 342.4 328.0C352.3 322.1 350.4 321.3 352.0 320.0" fill="none" stroke="#fff" stroke-width="4.2" stroke-linejoin="round" stroke-linecap="round" />
<polyline points="0.0,414.7 165.0,414.7 176.0,417.0 181.0,426.0" fill="none" stroke="#fff" stroke-width="3.0" stroke-linejoin="round" stroke-linecap="round" />
<polyline points="539.8,500.0 539.8,386.0 548.3,372.0 561.0,360.8 575.0,347.0" fill="none" stroke="#fff" stroke-width="3.6" stroke-linejoin="round" stroke-linecap="round" />
<polyline points="539.8,392.0 533.0,380.0 533.0,366.0" fill="none" stroke="#fff" stroke-width="2.0" stroke-linejoin="round" stroke-linecap="round" />
<path d="M383.2 384.6C385.3 386.7 391.2 394.1 396.0 397.4C400.8 400.7 406.7 403.5 412.0 404.6C417.3 405.7 422.7 405.0 428.0 403.8C433.3 402.6 438.7 399.8 444.0 397.4C449.3 395.0 454.7 391.5 460.0 389.4C465.3 387.3 469.3 385.4 476.0 384.6C482.7 383.8 492.0 383.8 500.0 384.6C508.0 385.4 516.8 389.4 524.0 389.4C531.2 389.4 536.0 387.7 543.5 384.8C551.0 381.9 560.8 377.3 569.0 372.0C577.2 366.7 586.3 358.1 593.0 352.8C599.7 347.5 603.7 342.9 609.0 340.0C614.3 337.1 614.3 335.7 625.0 335.2C635.7 334.7 661.0 336.7 673.0 336.8C685.0 336.9 693.0 336.1 697.0 336.0" fill="none" stroke="#fff" stroke-width="3.2" stroke-linejoin="round" stroke-linecap="round" />
<path d="M697.0 336.0C697.0 342.5 697.9 363.2 697.0 375.0C696.1 386.8 693.8 395.0 691.5 407.0C689.2 419.0 685.4 431.5 683.5 447.0C681.6 462.5 680.8 491.2 680.3 500.0" fill="none" stroke="#fff" stroke-width="2.8" stroke-linejoin="round" stroke-linecap="round" />
<polyline points="715.5,408.6 865.0,442.2" fill="none" stroke="#fff" stroke-width="2.6" stroke-linejoin="round" stroke-linecap="round" />
<path d="M717.0 330.0C721.0 331.1 729.0 334.3 741.0 336.4C753.0 338.5 768.3 341.5 789.0 342.8C809.7 344.1 852.3 344.1 865.0 344.4" fill="none" stroke="#fff" stroke-width="3.0" stroke-linejoin="round" stroke-linecap="round" />
<path d="M323.0 342.8C325.8 344.0 334.5 346.8 340.0 350.0C345.5 353.2 350.7 357.3 356.0 362.0C361.3 366.7 367.5 374.2 372.0 378.0C376.5 381.8 381.3 383.5 383.2 384.6" fill="none" stroke="#fff" stroke-width="2.4" stroke-linejoin="round" stroke-linecap="round" />
<polyline points="287.0,0.0 287.5,15.0 288.4,27.5 300.0,38.0 326.8,60.2 356.3,92.2 508.0,247.0 549.7,282.0 572.1,306.0 588.1,322.0 600.0,326.8 669.0,333.2 713.9,339.6" fill="none" stroke="#f1cf76" stroke-width="3.9" stroke-linejoin="round" stroke-linecap="round" />
<polyline points="287.0,0.0 287.5,15.0 288.4,27.5 300.0,38.0 326.8,60.2 356.3,92.2 508.0,247.0 549.7,282.0 572.1,306.0 588.1,322.0 600.0,326.8 669.0,333.2 713.9,339.6" fill="none" stroke="#fbe594" stroke-width="2.9" stroke-linejoin="round" stroke-linecap="round" />
<polyline points="356.3,92.2 364.0,96.0 428.0,124.0 453.0,138.4 472.2,147.0 504.8,161.4 509.0,162.0 514.4,155.7 522.0,157.6 539.4,176.8 572.0,209.4 591.2,226.7 620.0,242.0 640.0,252.0 665.0,259.0 700.0,259.6 865.0,261.0" fill="none" stroke="#f1cf76" stroke-width="3.9" stroke-linejoin="round" stroke-linecap="round" />
<polyline points="356.3,92.2 364.0,96.0 428.0,124.0 453.0,138.4 472.2,147.0 504.8,161.4 509.0,162.0 514.4,155.7 522.0,157.6 539.4,176.8 572.0,209.4 591.2,226.7 620.0,242.0 640.0,252.0 665.0,259.0 700.0,259.6 865.0,261.0" fill="none" stroke="#fbe594" stroke-width="2.9" stroke-linejoin="round" stroke-linecap="round" />
<polyline points="408.8,121.1 556.0,254.8 565.0,259.6 600.0,298.0 613.0,309.2 637.0,325.2 677.0,328.4 713.9,326.8" fill="none" stroke="#f1cf76" stroke-width="3.5" stroke-linejoin="round" stroke-linecap="round" />
<polyline points="408.8,121.1 556.0,254.8 565.0,259.6 600.0,298.0 613.0,309.2 637.0,325.2 677.0,328.4 713.9,326.8" fill="none" stroke="#fbe594" stroke-width="2.5" stroke-linejoin="round" stroke-linecap="round" />
<polyline points="356.0,380.0 358.4,364.8 364.8,355.2 380.8,339.2 421.7,294.8 539.4,176.8" fill="none" stroke="#f1cf76" stroke-width="3.5" stroke-linejoin="round" stroke-linecap="round" />
<polyline points="356.0,380.0 358.4,364.8 364.8,355.2 380.8,339.2 421.7,294.8 539.4,176.8" fill="none" stroke="#fbe594" stroke-width="2.5" stroke-linejoin="round" stroke-linecap="round" />
<polyline points="352.8,386.0 368.0,382.4 384.0,374.4 400.0,360.0 444.1,318.8 562.8,200.2" fill="none" stroke="#f1cf76" stroke-width="3.5" stroke-linejoin="round" stroke-linecap="round" />
<polyline points="352.8,386.0 368.0,382.4 384.0,374.4 400.0,360.0 444.1,318.8 562.8,200.2" fill="none" stroke="#fbe594" stroke-width="2.5" stroke-linejoin="round" stroke-linecap="round" />
<polyline points="713.9,326.8 714.0,340.0 712.3,375.0 709.0,423.0 704.0,450.0 703.5,500.0" fill="none" stroke="#f1cf76" stroke-width="3.7" stroke-linejoin="round" stroke-linecap="round" />
<polyline points="713.9,326.8 714.0,340.0 712.3,375.0 709.0,423.0 704.0,450.0 703.5,500.0" fill="none" stroke="#fbe594" stroke-width="2.7" stroke-linejoin="round" stroke-linecap="round" />
<polyline points="262.5,487.0 240.1,490.3 216.1,495.0" fill="none" stroke="#f1cf76" stroke-width="3.1" stroke-linejoin="round" stroke-linecap="round" />
<polyline points="262.5,487.0 240.1,490.3 216.1,495.0" fill="none" stroke="#fbe594" stroke-width="2.1" stroke-linejoin="round" stroke-linecap="round" />
<polyline points="262.0,500.0 264.0,485.0 270.0,470.0 284.0,455.0 316.0,421.4 352.8,384.6 356.0,380.0" fill="none" stroke="#f1cf76" stroke-width="5.1" stroke-linejoin="round" stroke-linecap="round" />
<polyline points="262.0,500.0 264.0,485.0 270.0,470.0 284.0,455.0 316.0,421.4 352.8,384.6 356.0,380.0" fill="none" stroke="#fbe594" stroke-width="4.1" stroke-linejoin="round" stroke-linecap="round" />
<text transform="translate(295.8 89.6) rotate(-45)" x="-21.6" y="4.0" font-size="11" fill="#5c6770" stroke="#fff" stroke-width="2.4" stroke-opacity="0.9" paint-order="stroke" stroke-linejoin="round" textLength="43.2" lengthAdjust="spacingAndGlyphs">Denman St</text>
<text transform="translate(322.1 100.5) rotate(45)" x="-20.7" y="4.0" font-size="11" fill="#5c6770" stroke="#fff" stroke-width="2.4" stroke-opacity="0.9" paint-order="stroke" stroke-linejoin="round" textLength="41.5" lengthAdjust="spacingAndGlyphs">Robson St</text>
<text transform="translate(244.6 172.9) rotate(45)" x="-17.9" y="4.0" font-size="11" fill="#5c6770" stroke="#fff" stroke-width="2.4" stroke-opacity="0.9" paint-order="stroke" stroke-linejoin="round" textLength="35.9" lengthAdjust="spacingAndGlyphs">Davie St</text>
<text transform="translate(224.1 222.2) rotate(62)" x="-21.5" y="4.0" font-size="11" fill="#5c6770" stroke="#fff" stroke-width="2.4" stroke-opacity="0.9" paint-order="stroke" stroke-linejoin="round" textLength="43.0" lengthAdjust="spacingAndGlyphs">Beach Ave</text>
<text transform="translate(420.7 319.5) rotate(-50)" x="-26.0" y="4.0" font-size="11" fill="#5c6770" stroke="#fff" stroke-width="2.4" stroke-opacity="0.9" paint-order="stroke" stroke-linejoin="round" textLength="52.0" lengthAdjust="spacingAndGlyphs">Granville St</text>
<text transform="translate(476.4 329.1) rotate(45)" x="-21.1" y="4.0" font-size="11" fill="#5c6770" stroke="#fff" stroke-width="2.4" stroke-opacity="0.9" paint-order="stroke" stroke-linejoin="round" textLength="42.1" lengthAdjust="spacingAndGlyphs">Nelson St</text>
<text transform="translate(262.5 372.0) rotate(-28)" x="-22.5" y="4.0" font-size="11" fill="#5c6770" stroke="#fff" stroke-width="2.4" stroke-opacity="0.9" paint-order="stroke" stroke-linejoin="round" textLength="44.9" lengthAdjust="spacingAndGlyphs">Burrard St</text>
<text transform="translate(503.9 384.2) rotate(12)" x="-25.6" y="4.0" font-size="11" fill="#5c6770" stroke="#fff" stroke-width="2.4" stroke-opacity="0.9" paint-order="stroke" stroke-linejoin="round" textLength="51.2" lengthAdjust="spacingAndGlyphs">Pacific Blvd</text>
<text transform="translate(589.7 481.5) rotate(-30)" x="-19.2" y="4.0" font-size="11" fill="#5c6770" stroke="#fff" stroke-width="2.4" stroke-opacity="0.9" paint-order="stroke" stroke-linejoin="round" textLength="38.4" lengthAdjust="spacingAndGlyphs">W 2nd Ave</text>
<text x="764.5" y="247.7" font-size="10.5" font-weight="normal" fill="#5c6770" stroke="#fff" stroke-width="2.6" stroke-opacity="0.85" paint-order="stroke" stroke-linejoin="round" textLength="58.3" lengthAdjust="spacingAndGlyphs" >E Cordova St</text>
<text x="817.0" y="347.0" font-size="10.5" font-weight="normal" fill="#5c6770" stroke="#fff" stroke-width="2.6" stroke-opacity="0.85" paint-order="stroke" stroke-linejoin="round" textLength="32.0" lengthAdjust="spacingAndGlyphs" >Prior St</text>
<text x="0.0" y="417.4" font-size="10.5" font-weight="normal" fill="#5c6770" stroke="#fff" stroke-width="2.6" stroke-opacity="0.85" paint-order="stroke" stroke-linejoin="round" textLength="30.7" lengthAdjust="spacingAndGlyphs" >all Ave</text>
<text x="-5.5" y="496.3" font-size="10.5" font-weight="normal" fill="#5c6770" stroke="#fff" stroke-width="2.6" stroke-opacity="0.85" paint-order="stroke" stroke-linejoin="round" textLength="18.0" lengthAdjust="spacingAndGlyphs" >Ave</text>
<text x="860.5" y="265.0" font-size="10.5" font-weight="normal" fill="#6b5a3a" stroke="#fff" stroke-width="2.6" stroke-opacity="0.85" paint-order="stroke" stroke-linejoin="round" textLength="5.1" lengthAdjust="spacingAndGlyphs" >E</text>
<text transform="translate(9 188) rotate(-76)" x="-52" y="4" font-size="12.5" font-style="italic" fill="#6b9ad6" stroke="#cfe6fc" stroke-width="1.500" paint-order="stroke" textLength="88" lengthAdjust="spacingAndGlyphs">English Bay</text>
<g transform="translate(523.8 222.8)"><rect x="-5.600" y="-5.600" width="11.200" height="11.200" rx="1.600" fill="#5ab6f2" stroke="#fff" stroke-width="0.800"/><path d="M-3 -3.400a0.800 0.800 0 0 1 0.800 -0.800h4.400a0.800 0.800 0 0 1 0.800 0.800v5.200a0.800 0.800 0 0 1 -0.800 0.800l0.900 1.400h-1l-0.800 -1.200h-2.600l-0.800 1.200h-1l0.900 -1.400a0.800 0.800 0 0 1 -0.800 -0.800z" fill="#fff"/><path d="M-2.200 -3.200h1.800v2.400h-1.800zM0.400 -3.200h1.800v2.400h-1.800z" fill="#5ab6f2"/><circle cx="-1.500" cy="1" r="0.600" fill="#5ab6f2"/><circle cx="1.500" cy="1" r="0.600" fill="#5ab6f2"/></g>
<g transform="translate(576.9 174.8)"><rect x="-5.600" y="-5.600" width="11.200" height="11.200" rx="1.600" fill="#5ab6f2" stroke="#fff" stroke-width="0.800"/><path d="M-3 -3.400a0.800 0.800 0 0 1 0.800 -0.800h4.400a0.800 0.800 0 0 1 0.800 0.800v5.200a0.800 0.800 0 0 1 -0.800 0.800l0.900 1.400h-1l-0.800 -1.200h-2.600l-0.800 1.200h-1l0.900 -1.400a0.800 0.800 0 0 1 -0.800 -0.800z" fill="#fff"/><path d="M-2.200 -3.200h1.800v2.400h-1.800zM0.400 -3.200h1.800v2.400h-1.800z" fill="#5ab6f2"/><circle cx="-1.500" cy="1" r="0.600" fill="#5ab6f2"/><circle cx="1.500" cy="1" r="0.600" fill="#5ab6f2"/></g>
<g transform="translate(605.1 293.9)"><rect x="-5.600" y="-5.600" width="11.200" height="11.200" rx="1.600" fill="#5ab6f2" stroke="#fff" stroke-width="0.800"/><path d="M-3 -3.400a0.800 0.800 0 0 1 0.800 -0.800h4.400a0.800 0.800 0 0 1 0.800 0.800v5.200a0.800 0.800 0 0 1 -0.800 0.800l0.900 1.400h-1l-0.800 -1.200h-2.600l-0.800 1.200h-1l0.900 -1.400a0.800 0.800 0 0 1 -0.800 -0.800z" fill="#fff"/><path d="M-2.200 -3.200h1.800v2.400h-1.800zM0.400 -3.200h1.800v2.400h-1.800z" fill="#5ab6f2"/><circle cx="-1.500" cy="1" r="0.600" fill="#5ab6f2"/><circle cx="1.500" cy="1" r="0.600" fill="#5ab6f2"/></g>
<g transform="translate(457.2 380.3)"><rect x="-5.600" y="-5.600" width="11.200" height="11.200" rx="1.600" fill="#5ab6f2" stroke="#fff" stroke-width="0.800"/><path d="M-3 -3.400a0.800 0.800 0 0 1 0.800 -0.800h4.400a0.800 0.800 0 0 1 0.800 0.800v5.200a0.800 0.800 0 0 1 -0.800 0.800l0.900 1.400h-1l-0.800 -1.200h-2.600l-0.800 1.200h-1l0.900 -1.400a0.800 0.800 0 0 1 -0.800 -0.800z" fill="#fff"/><path d="M-2.200 -3.200h1.800v2.400h-1.800zM0.400 -3.200h1.800v2.400h-1.800z" fill="#5ab6f2"/><circle cx="-1.500" cy="1" r="0.600" fill="#5ab6f2"/><circle cx="1.500" cy="1" r="0.600" fill="#5ab6f2"/></g>
<g transform="translate(706.2 404.0)"><rect x="-5.600" y="-5.600" width="11.200" height="11.200" rx="1.600" fill="#5ab6f2" stroke="#fff" stroke-width="0.800"/><path d="M-3 -3.400a0.800 0.800 0 0 1 0.800 -0.800h4.400a0.800 0.800 0 0 1 0.800 0.800v5.200a0.800 0.800 0 0 1 -0.800 0.800l0.900 1.400h-1l-0.800 -1.200h-2.600l-0.800 1.200h-1l0.900 -1.400a0.800 0.800 0 0 1 -0.800 -0.800z" fill="#fff"/><path d="M-2.200 -3.200h1.800v2.400h-1.800zM0.400 -3.200h1.800v2.400h-1.800z" fill="#5ab6f2"/><circle cx="-1.500" cy="1" r="0.600" fill="#5ab6f2"/><circle cx="1.500" cy="1" r="0.600" fill="#5ab6f2"/></g>
<g transform="translate(736.3 394.4)"><rect x="-5.600" y="-5.600" width="11.200" height="11.200" rx="1.600" fill="#5ab6f2" stroke="#fff" stroke-width="0.800"/><path d="M-3 -3.400a0.800 0.800 0 0 1 0.800 -0.800h4.400a0.800 0.800 0 0 1 0.800 0.800v5.200a0.800 0.800 0 0 1 -0.800 0.800l0.900 1.400h-1l-0.800 -1.200h-2.600l-0.800 1.200h-1l0.900 -1.400a0.800 0.800 0 0 1 -0.800 -0.800z" fill="#fff"/><path d="M-2.200 -3.200h1.800v2.400h-1.800zM0.400 -3.200h1.800v2.400h-1.800z" fill="#5ab6f2"/><circle cx="-1.500" cy="1" r="0.600" fill="#5ab6f2"/><circle cx="1.500" cy="1" r="0.600" fill="#5ab6f2"/></g>
<g transform="translate(751.7 394.4)"><rect x="-5.600" y="-5.600" width="11.200" height="11.200" rx="1.600" fill="#5ab6f2" stroke="#fff" stroke-width="0.800"/><path d="M-3 -3.400a0.800 0.800 0 0 1 0.800 -0.800h4.400a0.800 0.800 0 0 1 0.800 0.800v5.200a0.800 0.800 0 0 1 -0.800 0.800l0.900 1.400h-1l-0.800 -1.200h-2.600l-0.800 1.200h-1l0.900 -1.400a0.800 0.800 0 0 1 -0.800 -0.800z" fill="#fff"/><path d="M-2.200 -3.200h1.800v2.400h-1.800zM0.400 -3.200h1.800v2.400h-1.800z" fill="#5ab6f2"/><circle cx="-1.500" cy="1" r="0.600" fill="#5ab6f2"/><circle cx="1.500" cy="1" r="0.600" fill="#5ab6f2"/></g>
<g transform="translate(285.6 21.7)"><path d="M-7.500 -6.300a1.500 1.500 0 0 1 1.500 -1.500h12a1.500 1.500 0 0 1 1.500 1.500v9.300l-2.500 2.600l-5 2.200l-5 -2.200l-2.500 -2.600z" fill="#fff" stroke="#666" stroke-width="0.900"/><text x="0" y="3" text-anchor="middle" font-size="9" fill="#333">99</text></g>
<g transform="translate(459.7 142.1)"><path d="M-7.500 -6.300a1.500 1.500 0 0 1 1.500 -1.500h12a1.500 1.500 0 0 1 1.500 1.500v9.300l-2.500 2.600l-5 2.200l-5 -2.200l-2.500 -2.600z" fill="#fff" stroke="#666" stroke-width="0.900"/><text x="0" y="3" text-anchor="middle" font-size="9" fill="#333">7A</text></g>
<g transform="translate(496.9 192.6)"><path d="M-7.500 -6.300a1.500 1.500 0 0 1 1.500 -1.500h12a1.500 1.500 0 0 1 1.500 1.500v9.300l-2.500 2.600l-5 2.200l-5 -2.200l-2.500 -2.600z" fill="#fff" stroke="#666" stroke-width="0.900"/><text x="0" y="3" text-anchor="middle" font-size="9" fill="#333">1A</text></g>
<g transform="translate(566.0 204.2)"><path d="M-7.500 -6.300a1.500 1.500 0 0 1 1.500 -1.500h12a1.500 1.500 0 0 1 1.500 1.500v9.300l-2.500 2.600l-5 2.200l-5 -2.200l-2.500 -2.600z" fill="#fff" stroke="#666" stroke-width="0.900"/><text x="0" y="3" text-anchor="middle" font-size="9" fill="#333">7A</text></g>
<g transform="translate(622.4 315.6)"><path d="M-7.500 -6.300a1.500 1.500 0 0 1 1.500 -1.500h12a1.500 1.500 0 0 1 1.500 1.500v9.300l-2.500 2.600l-5 2.200l-5 -2.200l-2.500 -2.600z" fill="#fff" stroke="#666" stroke-width="0.900"/><text x="0" y="3" text-anchor="middle" font-size="9" fill="#333">1A</text></g>
<g transform="translate(373.9 381.5)"><path d="M-7.500 -6.300a1.500 1.500 0 0 1 1.500 -1.500h12a1.500 1.500 0 0 1 1.500 1.500v9.300l-2.500 2.600l-5 2.200l-5 -2.200l-2.500 -2.600z" fill="#fff" stroke="#666" stroke-width="0.900"/><text x="0" y="3" text-anchor="middle" font-size="9" fill="#333">99</text></g>
<g transform="translate(268.9 480.8)"><path d="M-7.500 -6.300a1.500 1.500 0 0 1 1.500 -1.500h12a1.500 1.500 0 0 1 1.500 1.500v9.300l-2.500 2.600l-5 2.200l-5 -2.200l-2.500 -2.600z" fill="#fff" stroke="#666" stroke-width="0.900"/><text x="0" y="3" text-anchor="middle" font-size="9" fill="#333">99</text></g>
<g transform="translate(707.5 442.4)"><path d="M-7.500 -6.300a1.500 1.500 0 0 1 1.500 -1.500h12a1.500 1.500 0 0 1 1.500 1.500v9.300l-2.500 2.600l-5 2.200l-5 -2.200l-2.500 -2.600z" fill="#fff" stroke="#666" stroke-width="0.900"/><text x="0" y="3" text-anchor="middle" font-size="9" fill="#333">1A</text></g>
<text x="311.2" y="185.9" font-size="13" font-weight="bold" fill="#7d8ba6" stroke="#fff" stroke-width="2.2" stroke-opacity="0.8" paint-order="stroke" stroke-linejoin="round" textLength="89.0" lengthAdjust="spacing">WEST END</text>
<text x="462.3" y="251.2" font-size="13" font-weight="bold" fill="#7d8ba6" stroke="#fff" stroke-width="2.2" stroke-opacity="0.8" paint-order="stroke" stroke-linejoin="round" textLength="101.2" lengthAdjust="spacing">DOWNTOWN</text>
<text x="592.3" y="236.5" font-size="13" font-weight="bold" fill="#7d8ba6" stroke="#fff" stroke-width="2.2" stroke-opacity="0.8" paint-order="stroke" stroke-linejoin="round" textLength="85.2" lengthAdjust="spacing">GASTOWN</text>
<text x="755.5" y="208.9" font-size="13" font-weight="bold" fill="#7d8ba6" stroke="#fff" stroke-width="2.2" stroke-opacity="0.8" paint-order="stroke" stroke-linejoin="round" textLength="101.2" lengthAdjust="spacing">DOWNTOWN</text>
<text x="766.4" y="223.0" font-size="13" font-weight="bold" fill="#7d8ba6" stroke="#fff" stroke-width="2.2" stroke-opacity="0.8" paint-order="stroke" stroke-linejoin="round" textLength="82.0" lengthAdjust="spacing">EASTSIDE</text>
<text x="591.0" y="284.5" font-size="13" font-weight="bold" fill="#7d8ba6" stroke="#fff" stroke-width="2.2" stroke-opacity="0.8" paint-order="stroke" stroke-linejoin="round" textLength="106.9" lengthAdjust="spacing">CHINATOWN</text>
<text x="89.6" y="369.6" font-size="13" font-weight="bold" fill="#7d8ba6" stroke="#fff" stroke-width="2.2" stroke-opacity="0.8" paint-order="stroke" stroke-linejoin="round" textLength="99.9" lengthAdjust="spacing">KITS POINT</text>
<text x="259.3" y="447.1" font-size="13" font-weight="bold" fill="#7d8ba6" stroke="#fff" stroke-width="2.2" stroke-opacity="0.8" paint-order="stroke" stroke-linejoin="round" textLength="97.3" lengthAdjust="spacing">GRANVILLE</text>
<text x="276.6" y="461.2" font-size="13" font-weight="bold" fill="#7d8ba6" stroke="#fff" stroke-width="2.2" stroke-opacity="0.8" paint-order="stroke" stroke-linejoin="round" textLength="62.7" lengthAdjust="spacing">ISLAND</text>
<text x="0.0" y="447.8" font-size="13" font-weight="bold" fill="#7d8ba6" stroke="#fff" stroke-width="2.2" stroke-opacity="0.8" paint-order="stroke" stroke-linejoin="round" textLength="35.2" lengthAdjust="spacing">ANO</text>
<text x="786.9" y="399.1" font-size="13" font-weight="bold" fill="#7d8ba6" stroke="#fff" stroke-width="2.2" stroke-opacity="0.8" paint-order="stroke" stroke-linejoin="round" textLength="45.5" lengthAdjust="spacing">STRA</text>
<text x="859.3" y="399.1" font-size="13" font-weight="bold" fill="#7d8ba6" stroke="#fff" stroke-width="2.2" stroke-opacity="0.8" paint-order="stroke" stroke-linejoin="round" textLength="6.4" lengthAdjust="spacing">C</text>
<text x="295.2" y="45.7" font-size="13" font-weight="normal" fill="#7b80b5" stroke="#fff" stroke-width="2.6" stroke-opacity="0.85" paint-order="stroke" stroke-linejoin="round" textLength="62.1" lengthAdjust="spacingAndGlyphs" >The Westin</text>
<text x="236.9" y="58.5" font-size="13" font-weight="normal" fill="#7b80b5" stroke="#fff" stroke-width="2.6" stroke-opacity="0.85" paint-order="stroke" stroke-linejoin="round" textLength="120.4" lengthAdjust="spacingAndGlyphs" >Bayshore, Vancouver</text>
<g transform="translate(368.8 42.3)"><path d="M0 12.2 L-3.4 6.4 A7.3 7.3 0 1 1 3.4 6.4 Z" fill="#8f95d9" stroke="#fff" stroke-width="1"/><path d="M-4.200 -2.400h0.900v2.200h2.300v-1.600h3.600a1.600 1.600 0 0 1 1.600 1.600v3.200h-0.900v-1.300h-6.600v1.300h-0.900z" fill="#fff"/><circle cx="-1.900" cy="-1.300" r="0.900" fill="#fff"/></g>
<text x="87.7" y="160.3" font-size="13" font-weight="normal" fill="#77838f" stroke="#fff" stroke-width="2.6" stroke-opacity="0.85" paint-order="stroke" stroke-linejoin="round" textLength="105.6" lengthAdjust="spacingAndGlyphs" >English Bay Beach</text>
<g transform="translate(204.9 152.4)"><path d="M0 12.2 L-3.4 6.4 A7.3 7.3 0 1 1 3.4 6.4 Z" fill="#8da0b3" stroke="#fff" stroke-width="1"/><circle r="2.6" fill="#fff"/></g>
<text x="491.1" y="115.4" font-size="13" font-weight="normal" fill="#3f8f9c" stroke="#fff" stroke-width="2.6" stroke-opacity="0.85" paint-order="stroke" stroke-linejoin="round" textLength="78.8" lengthAdjust="spacingAndGlyphs" >Canada Place</text>
<g transform="translate(582.0 107.6)"><path d="M0 12.2 L-3.4 6.4 A7.3 7.3 0 1 1 3.4 6.4 Z" fill="#52b5c5" stroke="#fff" stroke-width="1"/><path d="M-1 -4.600h0.800v1.800h1.900v2h0.900v2.200h-5.200v-2.200h0.900v-2h0.700z M-4 2.200h8l-1.200 2.200h-5.600z" fill="#fff"/></g>
<text x="571.8" y="146.2" font-size="13" font-weight="normal" fill="#d58a5c" stroke="#fff" stroke-width="2.6" stroke-opacity="0.85" paint-order="stroke" stroke-linejoin="round" textLength="95.4" lengthAdjust="spacingAndGlyphs" >Miku Vancouver</text>
<g transform="translate(562.2 136.4)"><path d="M0 12.2 L-3.4 6.4 A7.3 7.3 0 1 1 3.4 6.4 Z" fill="#f0a064" stroke="#fff" stroke-width="1"/><path d="M-2.6 -4v3.2a1.2 1.2 0 0 0 0.9 1.1V4h0.9V0.3a1.2 1.2 0 0 0 0.900 -1.100V-4h-0.6v3h-0.5v-3h-0.6v3h-0.500v-3zM1.400 -4c1.300 0 1.800 1.500 1.800 3v1.300h-0.900V4h-0.900z" fill="#fff"/></g>
<text x="619.2" y="187.8" font-size="13" font-weight="normal" fill="#3f8f9c" stroke="#fff" stroke-width="2.6" stroke-opacity="0.85" paint-order="stroke" stroke-linejoin="round" textLength="117.2" lengthAdjust="spacingAndGlyphs" >Gastown Vancouver</text>
<text x="619.2" y="200.6" font-size="13" font-weight="normal" fill="#3f8f9c" stroke="#fff" stroke-width="2.6" stroke-opacity="0.85" paint-order="stroke" stroke-linejoin="round" textLength="73.6" lengthAdjust="spacingAndGlyphs" >Steam Clock</text>
<g transform="translate(608.3 185.7)"><path d="M0 12.2 L-3.4 6.4 A7.3 7.3 0 1 1 3.4 6.4 Z" fill="#52b5c5" stroke="#fff" stroke-width="1"/><path d="M-3.800 -1.800h1.900l0.800 -1.100h2.200l0.800 1.100h1.900v5h-7.600z" fill="#fff"/><circle cy="0.800" r="1.500" fill="#52b5c5"/><path d="M-4.600 -4.200h0.800v0.900h0.900v0.800h-0.900v0.900h-0.800v-0.900h-0.900v-0.800h0.900z" fill="#fff"/></g>
<text x="335.5" y="205.1" font-size="13" font-weight="normal" fill="#3f8f9c" stroke="#fff" stroke-width="2.6" stroke-opacity="0.85" paint-order="stroke" stroke-linejoin="round" textLength="112.7" lengthAdjust="spacingAndGlyphs" >Scotiabank Theatre</text>
<text x="386.7" y="217.3" font-size="13" font-weight="normal" fill="#3f8f9c" stroke="#fff" stroke-width="2.6" stroke-opacity="0.85" paint-order="stroke" stroke-linejoin="round" textLength="61.5" lengthAdjust="spacingAndGlyphs" >Vancouver</text>
<text x="416.2" y="269.1" font-size="13" font-weight="normal" fill="#77838f" stroke="#fff" stroke-width="2.6" stroke-opacity="0.85" paint-order="stroke" stroke-linejoin="round" textLength="101.2" lengthAdjust="spacingAndGlyphs" >Vancouver Public</text>
<text x="388.7" y="282.6" font-size="13" font-weight="normal" fill="#77838f" stroke="#fff" stroke-width="2.6" stroke-opacity="0.85" paint-order="stroke" stroke-linejoin="round" textLength="128.7" lengthAdjust="spacingAndGlyphs" >Library Central Library</text>
<g transform="translate(528.9 267.6)"><path d="M0 12.2 L-3.4 6.4 A7.3 7.3 0 1 1 3.4 6.4 Z" fill="#8da0b3" stroke="#fff" stroke-width="1"/><path d="M-3.600 -3.400h2.600a1 1 0 0 1 1 0.800a1 1 0 0 1 1 -0.800h2.600v6.200h-2.800l-0.800 0.800l-0.800 -0.800h-2.800z" fill="#fff"/><path d="M0 -2.400v5" stroke="#8da0b3" stroke-width="0.700"/></g>
<text x="206.8" y="281.9" font-size="13" font-weight="normal" fill="#3f8f3f" stroke="#fff" stroke-width="2.6" stroke-opacity="0.85" paint-order="stroke" stroke-linejoin="round" textLength="108.8" lengthAdjust="spacingAndGlyphs" >Sunset Beach Park</text>
<text x="84.5" y="310.1" font-size="13" font-weight="normal" fill="#3f8f9c" stroke="#fff" stroke-width="2.6" stroke-opacity="0.85" paint-order="stroke" stroke-linejoin="round" textLength="59.5" lengthAdjust="spacingAndGlyphs" >Vancouver</text>
<text x="38.4" y="323.5" font-size="13" font-weight="normal" fill="#3f8f9c" stroke="#fff" stroke-width="2.6" stroke-opacity="0.85" paint-order="stroke" stroke-linejoin="round" textLength="105.6" lengthAdjust="spacingAndGlyphs" >Maritime Museum</text>
<g transform="translate(156.2 309.3)"><path d="M0 12.2 L-3.4 6.4 A7.3 7.3 0 1 1 3.4 6.4 Z" fill="#52b5c5" stroke="#fff" stroke-width="1"/><path d="M-4 -1.2L0 -4.2L4 -1.2V-0.4H-4ZM-3.2 0.4H-1.6V2.6H-3.2ZM-0.8 0.4H0.8V2.6H-0.8ZM1.6 0.4H3.2V2.6H1.6ZM-4 3.2H4V4.2H-4Z" fill="#fff"/></g>
<text x="204.9" y="339.6" font-size="13" font-weight="normal" fill="#3f8f9c" stroke="#fff" stroke-width="2.6" stroke-opacity="0.85" paint-order="stroke" stroke-linejoin="round" textLength="130.6" lengthAdjust="spacingAndGlyphs" >Museum of Vancouver</text>
<g transform="translate(193.4 330.4)"><path d="M0 12.2 L-3.4 6.4 A7.3 7.3 0 1 1 3.4 6.4 Z" fill="#52b5c5" stroke="#fff" stroke-width="1"/><path d="M-4 -1.2L0 -4.2L4 -1.2V-0.4H-4ZM-3.2 0.4H-1.6V2.6H-3.2ZM-0.8 0.4H0.8V2.6H-0.8ZM1.6 0.4H3.2V2.6H1.6ZM-4 3.2H4V4.2H-4Z" fill="#fff"/></g>
<text x="51.2" y="387.6" font-size="13" font-weight="normal" fill="#3f8f3f" stroke="#fff" stroke-width="2.6" stroke-opacity="0.85" paint-order="stroke" stroke-linejoin="round" textLength="50.6" lengthAdjust="spacingAndGlyphs" >Kitsilano</text>
<text x="43.5" y="400.4" font-size="13" font-weight="normal" fill="#3f8f3f" stroke="#fff" stroke-width="2.6" stroke-opacity="0.85" paint-order="stroke" stroke-linejoin="round" textLength="64.7" lengthAdjust="spacingAndGlyphs" >Beach Park</text>
<text x="203.0" y="402.3" font-size="13" font-weight="normal" fill="#5a80c4" stroke="#fff" stroke-width="2.6" stroke-opacity="0.85" paint-order="stroke" stroke-linejoin="round" textLength="88.4" lengthAdjust="spacingAndGlyphs" >Granville Island</text>
<text x="212.6" y="415.1" font-size="13" font-weight="normal" fill="#5a80c4" stroke="#fff" stroke-width="2.6" stroke-opacity="0.85" paint-order="stroke" stroke-linejoin="round" textLength="78.8" lengthAdjust="spacingAndGlyphs" >Public Market</text>
<g transform="translate(303.5 400.8)"><path d="M0 12.2 L-3.4 6.4 A7.3 7.3 0 1 1 3.4 6.4 Z" fill="#5b93ec" stroke="#fff" stroke-width="1"/><path d="M-4.400 -3.400h1.500l0.500 1.200h6.300l-1.200 3.300h-4.300l-0.400 0.900h5.100v0.800h-6.300l0.900 -1.900l-1.700 -3.500h-0.400z" fill="#fff"/><circle cx="-1.800" cy="3.600" r="0.700" fill="#fff"/><circle cx="1.800" cy="3.600" r="0.700" fill="#fff"/></g>
<text x="404.7" y="420.9" font-size="13" font-weight="normal" fill="#3f8f3f" stroke="#fff" stroke-width="2.6" stroke-opacity="0.85" paint-order="stroke" stroke-linejoin="round" textLength="32.7" lengthAdjust="spacingAndGlyphs" >David</text>
<text x="392.5" y="433.7" font-size="13" font-weight="normal" fill="#3f8f3f" stroke="#fff" stroke-width="2.6" stroke-opacity="0.85" paint-order="stroke" stroke-linejoin="round" textLength="55.7" lengthAdjust="spacingAndGlyphs" >Lam Park</text>
<text x="509.0" y="330.6" font-size="13" font-weight="normal" fill="#3f8f3f" stroke="#fff" stroke-width="2.6" stroke-opacity="0.85" paint-order="stroke" stroke-linejoin="round" textLength="51.9" lengthAdjust="spacingAndGlyphs" >BC Place</text>
<g transform="translate(572.4 322.1)"><path d="M0 12.2 L-3.4 6.4 A7.3 7.3 0 1 1 3.4 6.4 Z" fill="#58a85b" stroke="#fff" stroke-width="1"/><path d="M-4.200 -0.600c0 -1.400 8.400 -3.400 8.400 -0.200v2.400c0 2 -8.400 2 -8.400 0z" fill="#fff"/><ellipse cx="0" cy="0.300" rx="2.400" ry="1" fill="#58a85b"/></g>
<text x="500.1" y="367.7" font-size="13" font-weight="normal" fill="#3f8f9c" stroke="#fff" stroke-width="2.6" stroke-opacity="0.85" paint-order="stroke" stroke-linejoin="round" textLength="91.6" lengthAdjust="spacingAndGlyphs" >Parq Vancouver</text>
<g transform="translate(602.5 359.2)"><path d="M0 12.2 L-3.4 6.4 A7.3 7.3 0 1 1 3.4 6.4 Z" fill="#52b5c5" stroke="#fff" stroke-width="1"/><rect x="-3.600" y="-3.600" width="7.200" height="7.200" rx="1" fill="#fff" transform="rotate(0)"/><circle cx="-1.700" cy="-1.700" r="0.800" fill="#52b5c5"/><circle cx="1.700" cy="1.700" r="0.800" fill="#52b5c5"/><circle cx="0" cy="0" r="0.800" fill="#52b5c5"/></g>
<text x="646.0" y="356.8" font-size="13" font-weight="normal" fill="#3f8f9c" stroke="#fff" stroke-width="2.6" stroke-opacity="0.85" paint-order="stroke" stroke-linejoin="round" textLength="138.3" lengthAdjust="spacingAndGlyphs" >Science World at TELUS</text>
<text x="646.0" y="369.6" font-size="13" font-weight="normal" fill="#3f8f9c" stroke="#fff" stroke-width="2.6" stroke-opacity="0.85" paint-order="stroke" stroke-linejoin="round" textLength="97.3" lengthAdjust="spacingAndGlyphs" >World of Science</text>
<g transform="translate(667.2 382.9)"><path d="M0 12.2 L-3.4 6.4 A7.3 7.3 0 1 1 3.4 6.4 Z" fill="#52b5c5" stroke="#fff" stroke-width="1"/><path d="M-4 -1.2L0 -4.2L4 -1.2V-0.4H-4ZM-3.2 0.4H-1.6V2.6H-3.2ZM-0.8 0.4H0.8V2.6H-0.8ZM1.6 0.4H3.2V2.6H1.6ZM-4 3.2H4V4.2H-4Z" fill="#fff"/></g>
<text x="657.6" y="254.4" font-size="13" font-weight="normal" fill="#3f8f9c" stroke="#fff" stroke-width="2.6" stroke-opacity="0.85" paint-order="stroke" stroke-linejoin="round" textLength="99.9" lengthAdjust="spacingAndGlyphs" >Vancouver Police</text>
<text x="642.2" y="267.2" font-size="13" font-weight="normal" fill="#3f8f9c" stroke="#fff" stroke-width="2.6" stroke-opacity="0.85" paint-order="stroke" stroke-linejoin="round" textLength="115.3" lengthAdjust="spacingAndGlyphs" >Museum &amp; Archives</text>
<g transform="translate(736.3 223.5)"><path d="M0 12.2 L-3.4 6.4 A7.3 7.3 0 1 1 3.4 6.4 Z" fill="#52b5c5" stroke="#fff" stroke-width="1"/><path d="M-4 -1.2L0 -4.2L4 -1.2V-0.4H-4ZM-3.2 0.4H-1.6V2.6H-3.2ZM-0.8 0.4H0.8V2.6H-0.8ZM1.6 0.4H3.2V2.6H1.6ZM-4 3.2H4V4.2H-4Z" fill="#fff"/></g>
<text x="646.7" y="301.8" font-size="13" font-weight="normal" fill="#d58a5c" stroke="#fff" stroke-width="2.6" stroke-opacity="0.85" paint-order="stroke" stroke-linejoin="round" textLength="74.9" lengthAdjust="spacingAndGlyphs" >Phnom Penh</text>
<g transform="translate(733.1 293.3)"><path d="M0 12.2 L-3.4 6.4 A7.3 7.3 0 1 1 3.4 6.4 Z" fill="#f0a064" stroke="#fff" stroke-width="1"/><path d="M-2.6 -4v3.2a1.2 1.2 0 0 0 0.9 1.1V4h0.9V0.3a1.2 1.2 0 0 0 0.900 -1.100V-4h-0.6v3h-0.5v-3h-0.6v3h-0.500v-3zM1.400 -4c1.300 0 1.800 1.500 1.800 3v1.300h-0.900V4h-0.900z" fill="#fff"/></g>
<text x="512.9" y="443.9" font-size="13" font-weight="normal" fill="#d58a5c" stroke="#fff" stroke-width="2.6" stroke-opacity="0.85" paint-order="stroke" stroke-linejoin="round" textLength="114.0" lengthAdjust="spacingAndGlyphs" >CRAFT Beer Market</text>
<g transform="translate(637.7 436.0)"><path d="M0 12.2 L-3.4 6.4 A7.3 7.3 0 1 1 3.4 6.4 Z" fill="#f0a064" stroke="#fff" stroke-width="1"/><path d="M-2.6 -4v3.2a1.2 1.2 0 0 0 0.9 1.1V4h0.9V0.3a1.2 1.2 0 0 0 0.900 -1.100V-4h-0.6v3h-0.5v-3h-0.6v3h-0.500v-3zM1.400 -4c1.300 0 1.800 1.500 1.800 3v1.300h-0.900V4h-0.900z" fill="#fff"/></g>
<text x="715.8" y="427.9" font-size="13" font-weight="normal" fill="#77838f" stroke="#fff" stroke-width="2.6" stroke-opacity="0.85" paint-order="stroke" stroke-linejoin="round" textLength="102.4" lengthAdjust="spacingAndGlyphs" >Columbia College</text>
<text x="77.5" y="483.6" font-size="13" font-weight="normal" fill="#3f8f9c" stroke="#fff" stroke-width="2.6" stroke-opacity="0.85" paint-order="stroke" stroke-linejoin="round" textLength="126.8" lengthAdjust="spacingAndGlyphs" >Fifth Avenue Cinemas</text>
<g transform="translate(183.1 494.9)"><path d="M0 12.2 L-3.4 6.4 A7.3 7.3 0 1 1 3.4 6.4 Z" fill="#52b5c5" stroke="#fff" stroke-width="1"/><path d="M-4 -1.2L0 -4.2L4 -1.2V-0.4H-4ZM-3.2 0.4H-1.6V2.6H-3.2ZM-0.8 0.4H0.8V2.6H-0.8ZM1.6 0.4H3.2V2.6H1.6ZM-4 3.2H4V4.2H-4Z" fill="#fff"/></g>
<g id="markers">
<g transform="translate(485.5 152.9)"><path d="M-0.700 -0.200Q-3.300 -12 -11.600 -24.600A12.300 12.300 0 1 1 11.600 -24.600Q3.300 -12 0.700 -0.200A0.750 0.750 0 0 1 -0.700 -0.200Z" fill="#dd5342" stroke="#fff" stroke-opacity="0.850" stroke-width="0.900"/></g>
<g transform="translate(485.5 152.9)"><text x="0" y="-21.600" text-anchor="middle" font-size="14" fill="#000" text-rendering="geometricPrecision">7</text></g>
<g transform="translate(485.6 188.4)"><path d="M-0.700 -0.200Q-3.300 -12 -11.600 -24.600A12.300 12.300 0 1 1 11.600 -24.600Q3.300 -12 0.700 -0.200A0.750 0.750 0 0 1 -0.700 -0.200Z" fill="#dd5342" stroke="#fff" stroke-opacity="0.850" stroke-width="0.900"/></g>
<g transform="translate(485.6 188.4)"><text x="0" y="-21.600" text-anchor="middle" font-size="14" fill="#000" text-rendering="geometricPrecision">5</text></g>
<g transform="translate(481.8 187.7)"><path d="M-0.700 -0.200Q-3.300 -12 -11.600 -24.600A12.300 12.300 0 1 1 11.600 -24.600Q3.300 -12 0.700 -0.200A0.750 0.750 0 0 1 -0.700 -0.200Z" fill="#dd5342" stroke="#fff" stroke-opacity="0.850" stroke-width="0.900"/></g>
<g transform="translate(481.8 187.7)"><text x="0" y="-21.600" text-anchor="middle" font-size="14" fill="#000" text-rendering="geometricPrecision">8</text></g>
<g transform="translate(425.5 188.2)"><path d="M-0.700 -0.200Q-3.300 -12 -11.600 -24.600A12.300 12.300 0 1 1 11.600 -24.600Q3.300 -12 0.700 -0.200A0.750 0.750 0 0 1 -0.700 -0.200Z" fill="#dd5342" stroke="#fff" stroke-opacity="0.850" stroke-width="0.900"/></g>
<g transform="translate(425.5 188.2)"><text x="0" y="-21.600" text-anchor="middle" font-size="14" fill="#000" text-rendering="geometricPrecision">10</text></g>
<g transform="translate(437.8 196.8)"><path d="M-0.700 -0.200Q-3.300 -12 -11.600 -24.600A12.300 12.300 0 1 1 11.600 -24.600Q3.300 -12 0.700 -0.200A0.750 0.750 0 0 1 -0.700 -0.200Z" fill="#dd5342" stroke="#fff" stroke-opacity="0.850" stroke-width="0.900"/></g>
<g transform="translate(437.8 196.8)"><text x="0" y="-21.600" text-anchor="middle" font-size="14" fill="#000" text-rendering="geometricPrecision">9</text></g>
<g transform="translate(485.2 196.4)"><path d="M-0.700 -0.200Q-3.300 -12 -11.600 -24.600A12.300 12.300 0 1 1 11.600 -24.600Q3.300 -12 0.700 -0.200A0.750 0.750 0 0 1 -0.700 -0.200Z" fill="#dd5342" stroke="#fff" stroke-opacity="0.850" stroke-width="0.900"/></g>
<g transform="translate(485.2 196.4)"><text x="0" y="-21.600" text-anchor="middle" font-size="14" fill="#000" text-rendering="geometricPrecision">6</text></g>
<g transform="translate(475.7 207.3)"><path d="M-0.700 -0.200Q-3.300 -12 -11.600 -24.600A12.300 12.300 0 1 1 11.600 -24.600Q3.300 -12 0.700 -0.200A0.750 0.750 0 0 1 -0.700 -0.200Z" fill="#dd5342" stroke="#fff" stroke-opacity="0.850" stroke-width="0.900"/></g>
<g transform="translate(470.5 207.3)"><path d="M-0.700 -0.200Q-3.300 -12 -11.600 -24.600A12.300 12.300 0 1 1 11.600 -24.600Q3.300 -12 0.700 -0.200A0.750 0.750 0 0 1 -0.700 -0.200Z" fill="#dd5342" stroke="#fff" stroke-opacity="0.850" stroke-width="0.900"/></g>
<g transform="translate(475.7 207.3)"><text x="0" y="-21.600" text-anchor="middle" font-size="14" fill="#000" text-rendering="geometricPrecision">2</text></g>
<g transform="translate(470.5 207.3)"><text x="0" y="-21.600" text-anchor="middle" font-size="14" fill="#000" text-rendering="geometricPrecision">3</text></g>
<g transform="translate(438.6 206.3)"><path d="M-0.700 -0.200Q-3.300 -12 -11.600 -24.600A12.300 12.300 0 1 1 11.600 -24.600Q3.300 -12 0.700 -0.200A0.750 0.750 0 0 1 -0.700 -0.200Z" fill="#dd5342" stroke="#fff" stroke-opacity="0.850" stroke-width="0.900"/></g>
<g transform="translate(438.6 206.3)"><text x="0" y="-21.600" text-anchor="middle" font-size="14" fill="#000" text-rendering="geometricPrecision">4</text></g>
<g transform="translate(475.4 245.4)"><path d="M-0.700 -0.200Q-3.300 -12 -11.600 -24.600A12.300 12.300 0 1 1 11.600 -24.600Q3.300 -12 0.700 -0.200A0.750 0.750 0 0 1 -0.700 -0.200Z" fill="#dd5342" stroke="#fff" stroke-opacity="0.850" stroke-width="0.900"/></g>
<g transform="translate(475.4 245.4)"><text x="0" y="-21.600" text-anchor="middle" font-size="14" fill="#000" text-rendering="geometricPrecision">1</text></g>
<g transform="translate(425.5 262.1)"><path d="M-0.700 -0.200Q-3.300 -12 -11.600 -24.600A12.300 12.300 0 1 1 11.600 -24.600Q3.300 -12 0.700 -0.200A0.750 0.750 0 0 1 -0.700 -0.200Z" fill="#dd5342" stroke="#fff" stroke-opacity="0.850" stroke-width="0.900"/></g>
<g transform="translate(425.5 262.1)"><text x="0" y="-21.600" text-anchor="middle" font-size="14" fill="#000" text-rendering="geometricPrecision">11</text></g>
<g transform="translate(425.3 301.5)"><path d="M-0.700 -0.200Q-3.300 -12 -11.600 -24.600A12.300 12.300 0 1 1 11.600 -24.600Q3.300 -12 0.700 -0.200A0.750 0.750 0 0 1 -0.700 -0.200Z" fill="#dd5342" stroke="#fff" stroke-opacity="0.850" stroke-width="0.900"/></g>
<g transform="translate(425.3 301.5)"><text x="0" y="-21.600" text-anchor="middle" font-size="14" fill="#000" text-rendering="geometricPrecision">12</text></g>
<g transform="translate(425.3 365.3)"><path d="M-0.700 -0.200Q-3.300 -12 -11.600 -24.600A12.300 12.300 0 1 1 11.600 -24.600Q3.300 -12 0.700 -0.200A0.750 0.750 0 0 1 -0.700 -0.200Z" fill="#dd5342" stroke="#fff" stroke-opacity="0.850" stroke-width="0.900"/></g>
<g transform="translate(431.3 365.3)"><path d="M-0.700 -0.200Q-3.300 -12 -11.600 -24.600A12.300 12.300 0 1 1 11.600 -24.600Q3.300 -12 0.700 -0.200A0.750 0.750 0 0 1 -0.700 -0.200Z" fill="#dd5342" stroke="#fff" stroke-opacity="0.850" stroke-width="0.900"/></g>
<g transform="translate(425.3 365.3)"><text x="0" y="-21.600" text-anchor="middle" font-size="14" fill="#000" text-rendering="geometricPrecision">13</text></g>
<g transform="translate(431.3 365.3)"><text x="0" y="-21.600" text-anchor="middle" font-size="14" fill="#000" text-rendering="geometricPrecision">14</text></g>
</g>
<defs><filter id="sh" x="-20%" y="-20%" width="140%" height="150%"><feDropShadow dx="0" dy="1" stdDeviation="1.400" flood-color="#000" flood-opacity="0.300"/></filter></defs>
<g filter="url(#sh)"><rect x="10" y="10" width="93" height="29.500" rx="2" fill="#fff"/></g>
<line x1="46.500" y1="10" x2="46.500" y2="39.500" stroke="#e6e6e6" stroke-width="1"/>
<text x="17.600" y="28.800" font-size="11" font-weight="bold" fill="#000" textLength="21.300" lengthAdjust="spacingAndGlyphs">Map</text>
<text x="55.200" y="28.800" font-size="11" fill="#565656" textLength="39.200" lengthAdjust="spacingAndGlyphs">Satellite</text>
<g filter="url(#sh)"><rect x="826" y="10" width="25" height="25" rx="2" fill="#fff"/></g>
<path d="M831.500 20.500v-5h5M840.500 15.500h5v5M845.500 24.500v5h-5M836.500 29.500h-5v-5" fill="none" stroke="#666" stroke-width="2"/>
<g filter="url(#sh)"><rect x="827" y="383" width="28" height="28" rx="2" fill="#fff"/></g>
<g fill="#f5b325"><circle cx="841" cy="389.500" r="3.200"/><path d="M836.800 394.200a1.600 1.600 0 0 1 1.600 -1.400h5.200a1.600 1.600 0 0 1 1.600 1.400l0.600 6.300h-1.500l-0.500 6.500h-2l-0.500 -4.500h-0.600l-0.500 4.500h-2l-0.500 -6.500h-1.500z"/></g>
<path d="M839.500 393l1.500 2.500l1.500 -2.500" fill="none" stroke="#d98c1c" stroke-width="0.900"/>
<g filter="url(#sh)"><rect x="827" y="421.500" width="28" height="54" rx="2" fill="#fff"/></g>
<line x1="831" y1="448.500" x2="851" y2="448.500" stroke="#e6e6e6" stroke-width="1"/>
<path d="M835.500 435h11M841 429.500v11M835.500 462.500h11" stroke="#666" stroke-width="2.500" fill="none"/>
<text x="6.800" y="491.600" font-size="22" textLength="61.500" lengthAdjust="spacingAndGlyphs" fill="#fff" stroke="#fff" stroke-width="2.600" stroke-linejoin="round" stroke-opacity="0.9">Google</text>
<text x="6.800" y="491.600" font-size="22" textLength="61.500" lengthAdjust="spacingAndGlyphs" stroke-width="0.300"><tspan fill="#4a87ee" stroke="#4a87ee">G</tspan><tspan fill="#d9483b" stroke="#d9483b">o</tspan><tspan fill="#f1b92f" stroke="#f1b92f">o</tspan><tspan fill="#4a87ee" stroke="#4a87ee">g</tspan><tspan fill="#4fa95e" stroke="#4fa95e">l</tspan><tspan fill="#d9483b" stroke="#d9483b">e</tspan></text>
<defs><linearGradient id="ag" x1="0" x2="1"><stop offset="0" stop-color="#f5f5f5" stop-opacity="0"/><stop offset="1" stop-color="#f5f5f5" stop-opacity="0.700"/></linearGradient></defs>
<rect x="560" y="486" width="20" height="14" fill="url(#ag)"/><rect x="580" y="486" width="285" height="14" fill="#f5f5f5" fill-opacity="0.700"/>
<g font-size="10" fill="#444"><text x="584.200" y="497.600" textLength="108" lengthAdjust="spacingAndGlyphs">Map data ©2018 Google</text><text x="705" y="497.600" textLength="59" lengthAdjust="spacingAndGlyphs">Terms of Use</text><text x="775.500" y="497.600" textLength="83" lengthAdjust="spacingAndGlyphs">Report a map error</text></g>
</svg>
<!--MAPUI-->
  </div>
</div>
</body>
</html>
